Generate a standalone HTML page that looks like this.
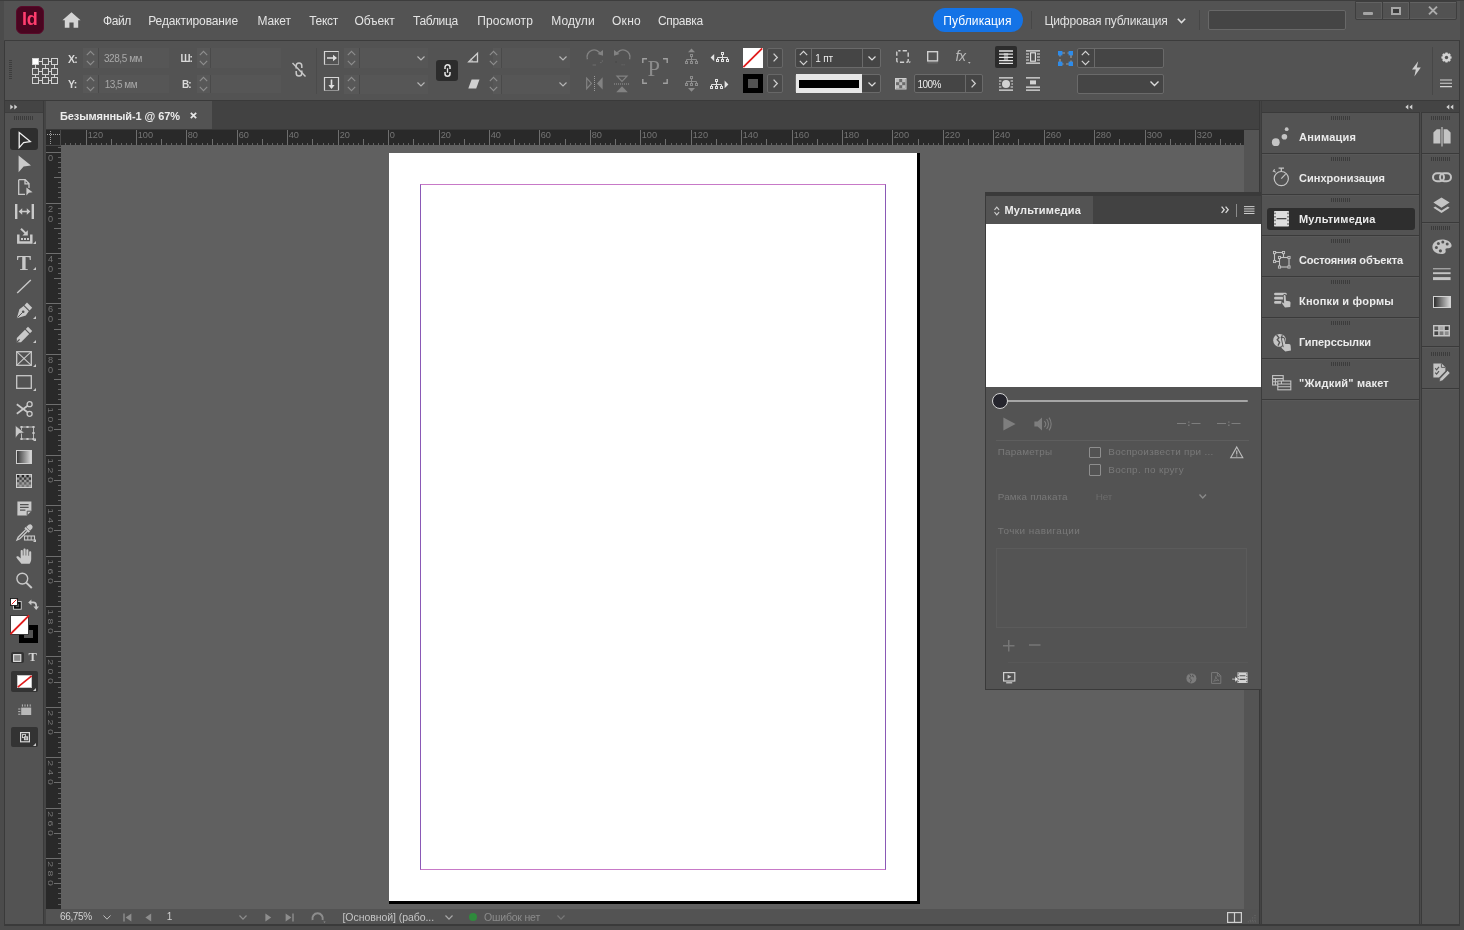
<!DOCTYPE html>
<html lang="ru">
<head>
<meta charset="utf-8">
<title>Безымянный-1 @ 67%</title>
<style>
*{box-sizing:border-box;margin:0;padding:0}
html,body{width:1464px;height:930px;overflow:hidden;background:#4b4b4b}
body{position:relative;font-family:"Liberation Sans",sans-serif;font-size:12px;color:#dcdcdc;-webkit-font-smoothing:antialiased}
.abs{position:absolute}
.t{position:absolute;white-space:nowrap;line-height:1}
svg{position:absolute;overflow:visible}
/* main frames */
#menubar{left:4px;top:0;width:1456px;height:40px;background:#535353}
#ctrl{left:4px;top:40px;width:1456px;height:60px;background:#535353;border-top:1px solid #3c3c3c;border-left:1px solid #444}
#sep1{left:4px;top:100px;width:1456px;height:1px;background:#3a3a3a}
#tools{left:5px;top:101px;width:38px;height:824px;background:#535353}
#toolshead{left:5px;top:101px;width:38px;height:11px;background:#444}
#tabbar{left:46px;top:101px;width:1213px;height:28px;background:#424242}
#tab{left:46px;top:101px;width:166px;height:28px;background:#535353}
#hruler{left:46px;top:129px;width:1198px;height:16px;background:#292929;border-top:1px solid #383838}
#vruler{left:46px;top:146px;width:15px;height:763px;background:#292929}
#canvas{left:61px;top:145px;width:1183px;height:764px;background:#606060}
#vscroll{left:1244px;top:129px;width:15px;height:780px;background:#545454;border-top:1px solid #383838}
#status{left:46px;top:909px;width:1214px;height:16px;background:#535353}
#dock{left:1262px;top:101px;width:157px;height:824px;background:#535353}
#dockhead{left:1262px;top:101px;width:197px;height:11px;background:#444}
#icons{left:1422px;top:112px;width:37px;height:813px;background:#535353}
.vline{background:#3a3a3a;width:2px}
.m{top:15px;font-size:12px;color:#e2e2e2}
.field{position:absolute;background:#464646;border:1px solid #6b6b6b;border-radius:2px}
.lbl{font-weight:bold;font-size:11px;color:#d8d8d8}
.val{font-size:11px;color:#a8a8a8}
.dis{color:#7c7c7c}
.row{position:absolute;left:1262px;width:158px;height:40px;background:#535353}
.rowt{position:absolute;left:37px;top:14px;font-weight:bold;font-size:11.5px;color:#e6e6e6;white-space:nowrap;line-height:1}
.grip{position:absolute;height:4px;background:repeating-linear-gradient(90deg,#3b3b3b 0 1px,transparent 1px 2px)}
#root{position:absolute;left:0;top:0;width:1464px;height:930px;will-change:transform;background:transparent}
</style>
</head>
<body>
<div id="root">
<!-- window frame blocks -->
<div class="abs" id="menubar"></div>
<div class="abs" id="ctrl"></div>
<div class="abs" id="sep1"></div>
<div class="abs" id="tools"></div>
<div class="abs" id="toolshead"></div>
<div class="abs" style="left:43px;top:101px;height:824px;width:3px;background:#454545;border-left:1px solid #3a3a3a"></div>
<div class="abs" id="tabbar"></div>
<div class="abs" id="tab"></div>
<div class="abs" id="hruler"></div>
<div class="abs" id="vruler"></div>
<div class="abs" id="canvas"></div>
<div class="abs" id="vscroll"></div>
<div class="abs" id="status"></div>
<div class="abs" style="left:1259px;top:101px;height:824px;width:3px;background:#444;border-left:1px solid #383838;border-right:1px solid #3c3c3c"></div>
<div class="abs" id="dock"></div>
<div class="abs" id="icons"></div>
<div class="abs" id="dockhead"></div>
<div class="abs" style="left:1262px;top:112px;width:197px;height:1px;background:#3a3a3a"></div>
<div class="abs" style="left:5px;top:112px;width:38px;height:1px;background:#3d3d3d"></div>
<div class="abs" style="left:1419px;top:112px;height:813px;width:3px;background:#4a4a4a;border-left:1px solid #3a3a3a;border-right:1px solid #3a3a3a"></div>
<div class="abs" style="left:4px;top:924px;width:1456px;height:2px;background:#3a3a3a"></div>
<div class="abs" style="left:4px;top:41px;width:1px;height:885px;background:#3a3a3a"></div>
<div class="abs" style="left:1459px;top:41px;width:1px;height:885px;background:#3a3a3a"></div>
<svg class="abs" style="left:0;top:0" width="1464" height="930" viewBox="0 0 1464 930" font-family="Liberation Sans, sans-serif" font-size="9.2" fill="#757575">
<g stroke="#6e6e6e" stroke-width="1" shape-rendering="crispEdges">
<line x1="60.5" y1="130" x2="60.5" y2="146" stroke="#484848"/>
<line x1="46" y1="145.5" x2="61" y2="145.5" stroke="#484848"/>
<line x1="65.5" y1="143" x2="65.5" y2="145" stroke="#626262"/>
<line x1="70.5" y1="143" x2="70.5" y2="145" stroke="#626262"/>
<line x1="75.5" y1="143" x2="75.5" y2="145" stroke="#626262"/>
<line x1="80.5" y1="143" x2="80.5" y2="145" stroke="#626262"/>
<line x1="86.5" y1="130" x2="86.5" y2="145"/>
<line x1="91.5" y1="143" x2="91.5" y2="145" stroke="#626262"/>
<line x1="96.5" y1="143" x2="96.5" y2="145" stroke="#626262"/>
<line x1="101.5" y1="143" x2="101.5" y2="145" stroke="#626262"/>
<line x1="106.5" y1="143" x2="106.5" y2="145" stroke="#626262"/>
<line x1="111.5" y1="139" x2="111.5" y2="145"/>
<line x1="116.5" y1="143" x2="116.5" y2="145" stroke="#626262"/>
<line x1="121.5" y1="143" x2="121.5" y2="145" stroke="#626262"/>
<line x1="126.5" y1="143" x2="126.5" y2="145" stroke="#626262"/>
<line x1="131.5" y1="143" x2="131.5" y2="145" stroke="#626262"/>
<line x1="136.5" y1="130" x2="136.5" y2="145"/>
<line x1="141.5" y1="143" x2="141.5" y2="145" stroke="#626262"/>
<line x1="146.5" y1="143" x2="146.5" y2="145" stroke="#626262"/>
<line x1="151.5" y1="143" x2="151.5" y2="145" stroke="#626262"/>
<line x1="156.5" y1="143" x2="156.5" y2="145" stroke="#626262"/>
<line x1="161.5" y1="139" x2="161.5" y2="145"/>
<line x1="166.5" y1="143" x2="166.5" y2="145" stroke="#626262"/>
<line x1="171.5" y1="143" x2="171.5" y2="145" stroke="#626262"/>
<line x1="176.5" y1="143" x2="176.5" y2="145" stroke="#626262"/>
<line x1="181.5" y1="143" x2="181.5" y2="145" stroke="#626262"/>
<line x1="186.5" y1="130" x2="186.5" y2="145"/>
<line x1="191.5" y1="143" x2="191.5" y2="145" stroke="#626262"/>
<line x1="196.5" y1="143" x2="196.5" y2="145" stroke="#626262"/>
<line x1="202.5" y1="143" x2="202.5" y2="145" stroke="#626262"/>
<line x1="207.5" y1="143" x2="207.5" y2="145" stroke="#626262"/>
<line x1="212.5" y1="139" x2="212.5" y2="145"/>
<line x1="217.5" y1="143" x2="217.5" y2="145" stroke="#626262"/>
<line x1="222.5" y1="143" x2="222.5" y2="145" stroke="#626262"/>
<line x1="227.5" y1="143" x2="227.5" y2="145" stroke="#626262"/>
<line x1="232.5" y1="143" x2="232.5" y2="145" stroke="#626262"/>
<line x1="237.5" y1="130" x2="237.5" y2="145"/>
<line x1="242.5" y1="143" x2="242.5" y2="145" stroke="#626262"/>
<line x1="247.5" y1="143" x2="247.5" y2="145" stroke="#626262"/>
<line x1="252.5" y1="143" x2="252.5" y2="145" stroke="#626262"/>
<line x1="257.5" y1="143" x2="257.5" y2="145" stroke="#626262"/>
<line x1="262.5" y1="139" x2="262.5" y2="145"/>
<line x1="267.5" y1="143" x2="267.5" y2="145" stroke="#626262"/>
<line x1="272.5" y1="143" x2="272.5" y2="145" stroke="#626262"/>
<line x1="277.5" y1="143" x2="277.5" y2="145" stroke="#626262"/>
<line x1="282.5" y1="143" x2="282.5" y2="145" stroke="#626262"/>
<line x1="287.5" y1="130" x2="287.5" y2="145"/>
<line x1="292.5" y1="143" x2="292.5" y2="145" stroke="#626262"/>
<line x1="297.5" y1="143" x2="297.5" y2="145" stroke="#626262"/>
<line x1="302.5" y1="143" x2="302.5" y2="145" stroke="#626262"/>
<line x1="307.5" y1="143" x2="307.5" y2="145" stroke="#626262"/>
<line x1="312.5" y1="139" x2="312.5" y2="145"/>
<line x1="317.5" y1="143" x2="317.5" y2="145" stroke="#626262"/>
<line x1="323.5" y1="143" x2="323.5" y2="145" stroke="#626262"/>
<line x1="328.5" y1="143" x2="328.5" y2="145" stroke="#626262"/>
<line x1="333.5" y1="143" x2="333.5" y2="145" stroke="#626262"/>
<line x1="338.5" y1="130" x2="338.5" y2="145"/>
<line x1="343.5" y1="143" x2="343.5" y2="145" stroke="#626262"/>
<line x1="348.5" y1="143" x2="348.5" y2="145" stroke="#626262"/>
<line x1="353.5" y1="143" x2="353.5" y2="145" stroke="#626262"/>
<line x1="358.5" y1="143" x2="358.5" y2="145" stroke="#626262"/>
<line x1="363.5" y1="139" x2="363.5" y2="145"/>
<line x1="368.5" y1="143" x2="368.5" y2="145" stroke="#626262"/>
<line x1="373.5" y1="143" x2="373.5" y2="145" stroke="#626262"/>
<line x1="378.5" y1="143" x2="378.5" y2="145" stroke="#626262"/>
<line x1="383.5" y1="143" x2="383.5" y2="145" stroke="#626262"/>
<line x1="388.5" y1="130" x2="388.5" y2="145"/>
<line x1="393.5" y1="143" x2="393.5" y2="145" stroke="#626262"/>
<line x1="398.5" y1="143" x2="398.5" y2="145" stroke="#626262"/>
<line x1="403.5" y1="143" x2="403.5" y2="145" stroke="#626262"/>
<line x1="408.5" y1="143" x2="408.5" y2="145" stroke="#626262"/>
<line x1="413.5" y1="139" x2="413.5" y2="145"/>
<line x1="418.5" y1="143" x2="418.5" y2="145" stroke="#626262"/>
<line x1="423.5" y1="143" x2="423.5" y2="145" stroke="#626262"/>
<line x1="428.5" y1="143" x2="428.5" y2="145" stroke="#626262"/>
<line x1="433.5" y1="143" x2="433.5" y2="145" stroke="#626262"/>
<line x1="439.5" y1="130" x2="439.5" y2="145"/>
<line x1="444.5" y1="143" x2="444.5" y2="145" stroke="#626262"/>
<line x1="449.5" y1="143" x2="449.5" y2="145" stroke="#626262"/>
<line x1="454.5" y1="143" x2="454.5" y2="145" stroke="#626262"/>
<line x1="459.5" y1="143" x2="459.5" y2="145" stroke="#626262"/>
<line x1="464.5" y1="139" x2="464.5" y2="145"/>
<line x1="469.5" y1="143" x2="469.5" y2="145" stroke="#626262"/>
<line x1="474.5" y1="143" x2="474.5" y2="145" stroke="#626262"/>
<line x1="479.5" y1="143" x2="479.5" y2="145" stroke="#626262"/>
<line x1="484.5" y1="143" x2="484.5" y2="145" stroke="#626262"/>
<line x1="489.5" y1="130" x2="489.5" y2="145"/>
<line x1="494.5" y1="143" x2="494.5" y2="145" stroke="#626262"/>
<line x1="499.5" y1="143" x2="499.5" y2="145" stroke="#626262"/>
<line x1="504.5" y1="143" x2="504.5" y2="145" stroke="#626262"/>
<line x1="509.5" y1="143" x2="509.5" y2="145" stroke="#626262"/>
<line x1="514.5" y1="139" x2="514.5" y2="145"/>
<line x1="519.5" y1="143" x2="519.5" y2="145" stroke="#626262"/>
<line x1="524.5" y1="143" x2="524.5" y2="145" stroke="#626262"/>
<line x1="529.5" y1="143" x2="529.5" y2="145" stroke="#626262"/>
<line x1="534.5" y1="143" x2="534.5" y2="145" stroke="#626262"/>
<line x1="539.5" y1="130" x2="539.5" y2="145"/>
<line x1="544.5" y1="143" x2="544.5" y2="145" stroke="#626262"/>
<line x1="549.5" y1="143" x2="549.5" y2="145" stroke="#626262"/>
<line x1="555.5" y1="143" x2="555.5" y2="145" stroke="#626262"/>
<line x1="560.5" y1="143" x2="560.5" y2="145" stroke="#626262"/>
<line x1="565.5" y1="139" x2="565.5" y2="145"/>
<line x1="570.5" y1="143" x2="570.5" y2="145" stroke="#626262"/>
<line x1="575.5" y1="143" x2="575.5" y2="145" stroke="#626262"/>
<line x1="580.5" y1="143" x2="580.5" y2="145" stroke="#626262"/>
<line x1="585.5" y1="143" x2="585.5" y2="145" stroke="#626262"/>
<line x1="590.5" y1="130" x2="590.5" y2="145"/>
<line x1="595.5" y1="143" x2="595.5" y2="145" stroke="#626262"/>
<line x1="600.5" y1="143" x2="600.5" y2="145" stroke="#626262"/>
<line x1="605.5" y1="143" x2="605.5" y2="145" stroke="#626262"/>
<line x1="610.5" y1="143" x2="610.5" y2="145" stroke="#626262"/>
<line x1="615.5" y1="139" x2="615.5" y2="145"/>
<line x1="620.5" y1="143" x2="620.5" y2="145" stroke="#626262"/>
<line x1="625.5" y1="143" x2="625.5" y2="145" stroke="#626262"/>
<line x1="630.5" y1="143" x2="630.5" y2="145" stroke="#626262"/>
<line x1="635.5" y1="143" x2="635.5" y2="145" stroke="#626262"/>
<line x1="640.5" y1="130" x2="640.5" y2="145"/>
<line x1="645.5" y1="143" x2="645.5" y2="145" stroke="#626262"/>
<line x1="650.5" y1="143" x2="650.5" y2="145" stroke="#626262"/>
<line x1="655.5" y1="143" x2="655.5" y2="145" stroke="#626262"/>
<line x1="660.5" y1="143" x2="660.5" y2="145" stroke="#626262"/>
<line x1="665.5" y1="139" x2="665.5" y2="145"/>
<line x1="671.5" y1="143" x2="671.5" y2="145" stroke="#626262"/>
<line x1="676.5" y1="143" x2="676.5" y2="145" stroke="#626262"/>
<line x1="681.5" y1="143" x2="681.5" y2="145" stroke="#626262"/>
<line x1="686.5" y1="143" x2="686.5" y2="145" stroke="#626262"/>
<line x1="691.5" y1="130" x2="691.5" y2="145"/>
<line x1="696.5" y1="143" x2="696.5" y2="145" stroke="#626262"/>
<line x1="701.5" y1="143" x2="701.5" y2="145" stroke="#626262"/>
<line x1="706.5" y1="143" x2="706.5" y2="145" stroke="#626262"/>
<line x1="711.5" y1="143" x2="711.5" y2="145" stroke="#626262"/>
<line x1="716.5" y1="139" x2="716.5" y2="145"/>
<line x1="721.5" y1="143" x2="721.5" y2="145" stroke="#626262"/>
<line x1="726.5" y1="143" x2="726.5" y2="145" stroke="#626262"/>
<line x1="731.5" y1="143" x2="731.5" y2="145" stroke="#626262"/>
<line x1="736.5" y1="143" x2="736.5" y2="145" stroke="#626262"/>
<line x1="741.5" y1="130" x2="741.5" y2="145"/>
<line x1="746.5" y1="143" x2="746.5" y2="145" stroke="#626262"/>
<line x1="751.5" y1="143" x2="751.5" y2="145" stroke="#626262"/>
<line x1="756.5" y1="143" x2="756.5" y2="145" stroke="#626262"/>
<line x1="761.5" y1="143" x2="761.5" y2="145" stroke="#626262"/>
<line x1="766.5" y1="139" x2="766.5" y2="145"/>
<line x1="771.5" y1="143" x2="771.5" y2="145" stroke="#626262"/>
<line x1="776.5" y1="143" x2="776.5" y2="145" stroke="#626262"/>
<line x1="781.5" y1="143" x2="781.5" y2="145" stroke="#626262"/>
<line x1="786.5" y1="143" x2="786.5" y2="145" stroke="#626262"/>
<line x1="792.5" y1="130" x2="792.5" y2="145"/>
<line x1="797.5" y1="143" x2="797.5" y2="145" stroke="#626262"/>
<line x1="802.5" y1="143" x2="802.5" y2="145" stroke="#626262"/>
<line x1="807.5" y1="143" x2="807.5" y2="145" stroke="#626262"/>
<line x1="812.5" y1="143" x2="812.5" y2="145" stroke="#626262"/>
<line x1="817.5" y1="139" x2="817.5" y2="145"/>
<line x1="822.5" y1="143" x2="822.5" y2="145" stroke="#626262"/>
<line x1="827.5" y1="143" x2="827.5" y2="145" stroke="#626262"/>
<line x1="832.5" y1="143" x2="832.5" y2="145" stroke="#626262"/>
<line x1="837.5" y1="143" x2="837.5" y2="145" stroke="#626262"/>
<line x1="842.5" y1="130" x2="842.5" y2="145"/>
<line x1="847.5" y1="143" x2="847.5" y2="145" stroke="#626262"/>
<line x1="852.5" y1="143" x2="852.5" y2="145" stroke="#626262"/>
<line x1="857.5" y1="143" x2="857.5" y2="145" stroke="#626262"/>
<line x1="862.5" y1="143" x2="862.5" y2="145" stroke="#626262"/>
<line x1="867.5" y1="139" x2="867.5" y2="145"/>
<line x1="872.5" y1="143" x2="872.5" y2="145" stroke="#626262"/>
<line x1="877.5" y1="143" x2="877.5" y2="145" stroke="#626262"/>
<line x1="882.5" y1="143" x2="882.5" y2="145" stroke="#626262"/>
<line x1="887.5" y1="143" x2="887.5" y2="145" stroke="#626262"/>
<line x1="892.5" y1="130" x2="892.5" y2="145"/>
<line x1="897.5" y1="143" x2="897.5" y2="145" stroke="#626262"/>
<line x1="902.5" y1="143" x2="902.5" y2="145" stroke="#626262"/>
<line x1="908.5" y1="143" x2="908.5" y2="145" stroke="#626262"/>
<line x1="913.5" y1="143" x2="913.5" y2="145" stroke="#626262"/>
<line x1="918.5" y1="139" x2="918.5" y2="145"/>
<line x1="923.5" y1="143" x2="923.5" y2="145" stroke="#626262"/>
<line x1="928.5" y1="143" x2="928.5" y2="145" stroke="#626262"/>
<line x1="933.5" y1="143" x2="933.5" y2="145" stroke="#626262"/>
<line x1="938.5" y1="143" x2="938.5" y2="145" stroke="#626262"/>
<line x1="943.5" y1="130" x2="943.5" y2="145"/>
<line x1="948.5" y1="143" x2="948.5" y2="145" stroke="#626262"/>
<line x1="953.5" y1="143" x2="953.5" y2="145" stroke="#626262"/>
<line x1="958.5" y1="143" x2="958.5" y2="145" stroke="#626262"/>
<line x1="963.5" y1="143" x2="963.5" y2="145" stroke="#626262"/>
<line x1="968.5" y1="139" x2="968.5" y2="145"/>
<line x1="973.5" y1="143" x2="973.5" y2="145" stroke="#626262"/>
<line x1="978.5" y1="143" x2="978.5" y2="145" stroke="#626262"/>
<line x1="983.5" y1="143" x2="983.5" y2="145" stroke="#626262"/>
<line x1="988.5" y1="143" x2="988.5" y2="145" stroke="#626262"/>
<line x1="993.5" y1="130" x2="993.5" y2="145"/>
<line x1="998.5" y1="143" x2="998.5" y2="145" stroke="#626262"/>
<line x1="1003.5" y1="143" x2="1003.5" y2="145" stroke="#626262"/>
<line x1="1008.5" y1="143" x2="1008.5" y2="145" stroke="#626262"/>
<line x1="1013.5" y1="143" x2="1013.5" y2="145" stroke="#626262"/>
<line x1="1018.5" y1="139" x2="1018.5" y2="145"/>
<line x1="1024.5" y1="143" x2="1024.5" y2="145" stroke="#626262"/>
<line x1="1029.5" y1="143" x2="1029.5" y2="145" stroke="#626262"/>
<line x1="1034.5" y1="143" x2="1034.5" y2="145" stroke="#626262"/>
<line x1="1039.5" y1="143" x2="1039.5" y2="145" stroke="#626262"/>
<line x1="1044.5" y1="130" x2="1044.5" y2="145"/>
<line x1="1049.5" y1="143" x2="1049.5" y2="145" stroke="#626262"/>
<line x1="1054.5" y1="143" x2="1054.5" y2="145" stroke="#626262"/>
<line x1="1059.5" y1="143" x2="1059.5" y2="145" stroke="#626262"/>
<line x1="1064.5" y1="143" x2="1064.5" y2="145" stroke="#626262"/>
<line x1="1069.5" y1="139" x2="1069.5" y2="145"/>
<line x1="1074.5" y1="143" x2="1074.5" y2="145" stroke="#626262"/>
<line x1="1079.5" y1="143" x2="1079.5" y2="145" stroke="#626262"/>
<line x1="1084.5" y1="143" x2="1084.5" y2="145" stroke="#626262"/>
<line x1="1089.5" y1="143" x2="1089.5" y2="145" stroke="#626262"/>
<line x1="1094.5" y1="130" x2="1094.5" y2="145"/>
<line x1="1099.5" y1="143" x2="1099.5" y2="145" stroke="#626262"/>
<line x1="1104.5" y1="143" x2="1104.5" y2="145" stroke="#626262"/>
<line x1="1109.5" y1="143" x2="1109.5" y2="145" stroke="#626262"/>
<line x1="1114.5" y1="143" x2="1114.5" y2="145" stroke="#626262"/>
<line x1="1119.5" y1="139" x2="1119.5" y2="145"/>
<line x1="1124.5" y1="143" x2="1124.5" y2="145" stroke="#626262"/>
<line x1="1129.5" y1="143" x2="1129.5" y2="145" stroke="#626262"/>
<line x1="1134.5" y1="143" x2="1134.5" y2="145" stroke="#626262"/>
<line x1="1140.5" y1="143" x2="1140.5" y2="145" stroke="#626262"/>
<line x1="1145.5" y1="130" x2="1145.5" y2="145"/>
<line x1="1150.5" y1="143" x2="1150.5" y2="145" stroke="#626262"/>
<line x1="1155.5" y1="143" x2="1155.5" y2="145" stroke="#626262"/>
<line x1="1160.5" y1="143" x2="1160.5" y2="145" stroke="#626262"/>
<line x1="1165.5" y1="143" x2="1165.5" y2="145" stroke="#626262"/>
<line x1="1170.5" y1="139" x2="1170.5" y2="145"/>
<line x1="1175.5" y1="143" x2="1175.5" y2="145" stroke="#626262"/>
<line x1="1180.5" y1="143" x2="1180.5" y2="145" stroke="#626262"/>
<line x1="1185.5" y1="143" x2="1185.5" y2="145" stroke="#626262"/>
<line x1="1190.5" y1="143" x2="1190.5" y2="145" stroke="#626262"/>
<line x1="1195.5" y1="130" x2="1195.5" y2="145"/>
<line x1="1200.5" y1="143" x2="1200.5" y2="145" stroke="#626262"/>
<line x1="1205.5" y1="143" x2="1205.5" y2="145" stroke="#626262"/>
<line x1="1210.5" y1="143" x2="1210.5" y2="145" stroke="#626262"/>
<line x1="1215.5" y1="143" x2="1215.5" y2="145" stroke="#626262"/>
<line x1="1220.5" y1="139" x2="1220.5" y2="145"/>
<line x1="1225.5" y1="143" x2="1225.5" y2="145" stroke="#626262"/>
<line x1="1230.5" y1="143" x2="1230.5" y2="145" stroke="#626262"/>
<line x1="1235.5" y1="143" x2="1235.5" y2="145" stroke="#626262"/>
<line x1="1240.5" y1="143" x2="1240.5" y2="145" stroke="#626262"/>
<line x1="58" y1="147.5" x2="61" y2="147.5" stroke="#626262"/>
<line x1="46" y1="152.5" x2="61" y2="152.5"/>
<line x1="58" y1="157.5" x2="61" y2="157.5" stroke="#626262"/>
<line x1="58" y1="162.5" x2="61" y2="162.5" stroke="#626262"/>
<line x1="58" y1="167.5" x2="61" y2="167.5" stroke="#626262"/>
<line x1="58" y1="172.5" x2="61" y2="172.5" stroke="#626262"/>
<line x1="54" y1="177.5" x2="61" y2="177.5"/>
<line x1="58" y1="182.5" x2="61" y2="182.5" stroke="#626262"/>
<line x1="58" y1="187.5" x2="61" y2="187.5" stroke="#626262"/>
<line x1="58" y1="192.5" x2="61" y2="192.5" stroke="#626262"/>
<line x1="58" y1="197.5" x2="61" y2="197.5" stroke="#626262"/>
<line x1="46" y1="203.5" x2="61" y2="203.5"/>
<line x1="58" y1="208.5" x2="61" y2="208.5" stroke="#626262"/>
<line x1="58" y1="213.5" x2="61" y2="213.5" stroke="#626262"/>
<line x1="58" y1="218.5" x2="61" y2="218.5" stroke="#626262"/>
<line x1="58" y1="223.5" x2="61" y2="223.5" stroke="#626262"/>
<line x1="54" y1="228.5" x2="61" y2="228.5"/>
<line x1="58" y1="233.5" x2="61" y2="233.5" stroke="#626262"/>
<line x1="58" y1="238.5" x2="61" y2="238.5" stroke="#626262"/>
<line x1="58" y1="243.5" x2="61" y2="243.5" stroke="#626262"/>
<line x1="58" y1="248.5" x2="61" y2="248.5" stroke="#626262"/>
<line x1="46" y1="253.5" x2="61" y2="253.5"/>
<line x1="58" y1="258.5" x2="61" y2="258.5" stroke="#626262"/>
<line x1="58" y1="263.5" x2="61" y2="263.5" stroke="#626262"/>
<line x1="58" y1="268.5" x2="61" y2="268.5" stroke="#626262"/>
<line x1="58" y1="273.5" x2="61" y2="273.5" stroke="#626262"/>
<line x1="54" y1="278.5" x2="61" y2="278.5"/>
<line x1="58" y1="283.5" x2="61" y2="283.5" stroke="#626262"/>
<line x1="58" y1="288.5" x2="61" y2="288.5" stroke="#626262"/>
<line x1="58" y1="293.5" x2="61" y2="293.5" stroke="#626262"/>
<line x1="58" y1="298.5" x2="61" y2="298.5" stroke="#626262"/>
<line x1="46" y1="303.5" x2="61" y2="303.5"/>
<line x1="58" y1="308.5" x2="61" y2="308.5" stroke="#626262"/>
<line x1="58" y1="313.5" x2="61" y2="313.5" stroke="#626262"/>
<line x1="58" y1="319.5" x2="61" y2="319.5" stroke="#626262"/>
<line x1="58" y1="324.5" x2="61" y2="324.5" stroke="#626262"/>
<line x1="54" y1="329.5" x2="61" y2="329.5"/>
<line x1="58" y1="334.5" x2="61" y2="334.5" stroke="#626262"/>
<line x1="58" y1="339.5" x2="61" y2="339.5" stroke="#626262"/>
<line x1="58" y1="344.5" x2="61" y2="344.5" stroke="#626262"/>
<line x1="58" y1="349.5" x2="61" y2="349.5" stroke="#626262"/>
<line x1="46" y1="354.5" x2="61" y2="354.5"/>
<line x1="58" y1="359.5" x2="61" y2="359.5" stroke="#626262"/>
<line x1="58" y1="364.5" x2="61" y2="364.5" stroke="#626262"/>
<line x1="58" y1="369.5" x2="61" y2="369.5" stroke="#626262"/>
<line x1="58" y1="374.5" x2="61" y2="374.5" stroke="#626262"/>
<line x1="54" y1="379.5" x2="61" y2="379.5"/>
<line x1="58" y1="384.5" x2="61" y2="384.5" stroke="#626262"/>
<line x1="58" y1="389.5" x2="61" y2="389.5" stroke="#626262"/>
<line x1="58" y1="394.5" x2="61" y2="394.5" stroke="#626262"/>
<line x1="58" y1="399.5" x2="61" y2="399.5" stroke="#626262"/>
<line x1="46" y1="404.5" x2="61" y2="404.5"/>
<line x1="58" y1="409.5" x2="61" y2="409.5" stroke="#626262"/>
<line x1="58" y1="414.5" x2="61" y2="414.5" stroke="#626262"/>
<line x1="58" y1="419.5" x2="61" y2="419.5" stroke="#626262"/>
<line x1="58" y1="424.5" x2="61" y2="424.5" stroke="#626262"/>
<line x1="54" y1="429.5" x2="61" y2="429.5"/>
<line x1="58" y1="435.5" x2="61" y2="435.5" stroke="#626262"/>
<line x1="58" y1="440.5" x2="61" y2="440.5" stroke="#626262"/>
<line x1="58" y1="445.5" x2="61" y2="445.5" stroke="#626262"/>
<line x1="58" y1="450.5" x2="61" y2="450.5" stroke="#626262"/>
<line x1="46" y1="455.5" x2="61" y2="455.5"/>
<line x1="58" y1="460.5" x2="61" y2="460.5" stroke="#626262"/>
<line x1="58" y1="465.5" x2="61" y2="465.5" stroke="#626262"/>
<line x1="58" y1="470.5" x2="61" y2="470.5" stroke="#626262"/>
<line x1="58" y1="475.5" x2="61" y2="475.5" stroke="#626262"/>
<line x1="54" y1="480.5" x2="61" y2="480.5"/>
<line x1="58" y1="485.5" x2="61" y2="485.5" stroke="#626262"/>
<line x1="58" y1="490.5" x2="61" y2="490.5" stroke="#626262"/>
<line x1="58" y1="495.5" x2="61" y2="495.5" stroke="#626262"/>
<line x1="58" y1="500.5" x2="61" y2="500.5" stroke="#626262"/>
<line x1="46" y1="505.5" x2="61" y2="505.5"/>
<line x1="58" y1="510.5" x2="61" y2="510.5" stroke="#626262"/>
<line x1="58" y1="515.5" x2="61" y2="515.5" stroke="#626262"/>
<line x1="58" y1="520.5" x2="61" y2="520.5" stroke="#626262"/>
<line x1="58" y1="525.5" x2="61" y2="525.5" stroke="#626262"/>
<line x1="54" y1="530.5" x2="61" y2="530.5"/>
<line x1="58" y1="535.5" x2="61" y2="535.5" stroke="#626262"/>
<line x1="58" y1="540.5" x2="61" y2="540.5" stroke="#626262"/>
<line x1="58" y1="545.5" x2="61" y2="545.5" stroke="#626262"/>
<line x1="58" y1="550.5" x2="61" y2="550.5" stroke="#626262"/>
<line x1="46" y1="556.5" x2="61" y2="556.5"/>
<line x1="58" y1="561.5" x2="61" y2="561.5" stroke="#626262"/>
<line x1="58" y1="566.5" x2="61" y2="566.5" stroke="#626262"/>
<line x1="58" y1="571.5" x2="61" y2="571.5" stroke="#626262"/>
<line x1="58" y1="576.5" x2="61" y2="576.5" stroke="#626262"/>
<line x1="54" y1="581.5" x2="61" y2="581.5"/>
<line x1="58" y1="586.5" x2="61" y2="586.5" stroke="#626262"/>
<line x1="58" y1="591.5" x2="61" y2="591.5" stroke="#626262"/>
<line x1="58" y1="596.5" x2="61" y2="596.5" stroke="#626262"/>
<line x1="58" y1="601.5" x2="61" y2="601.5" stroke="#626262"/>
<line x1="46" y1="606.5" x2="61" y2="606.5"/>
<line x1="58" y1="611.5" x2="61" y2="611.5" stroke="#626262"/>
<line x1="58" y1="616.5" x2="61" y2="616.5" stroke="#626262"/>
<line x1="58" y1="621.5" x2="61" y2="621.5" stroke="#626262"/>
<line x1="58" y1="626.5" x2="61" y2="626.5" stroke="#626262"/>
<line x1="54" y1="631.5" x2="61" y2="631.5"/>
<line x1="58" y1="636.5" x2="61" y2="636.5" stroke="#626262"/>
<line x1="58" y1="641.5" x2="61" y2="641.5" stroke="#626262"/>
<line x1="58" y1="646.5" x2="61" y2="646.5" stroke="#626262"/>
<line x1="58" y1="651.5" x2="61" y2="651.5" stroke="#626262"/>
<line x1="46" y1="656.5" x2="61" y2="656.5"/>
<line x1="58" y1="661.5" x2="61" y2="661.5" stroke="#626262"/>
<line x1="58" y1="666.5" x2="61" y2="666.5" stroke="#626262"/>
<line x1="58" y1="672.5" x2="61" y2="672.5" stroke="#626262"/>
<line x1="58" y1="677.5" x2="61" y2="677.5" stroke="#626262"/>
<line x1="54" y1="682.5" x2="61" y2="682.5"/>
<line x1="58" y1="687.5" x2="61" y2="687.5" stroke="#626262"/>
<line x1="58" y1="692.5" x2="61" y2="692.5" stroke="#626262"/>
<line x1="58" y1="697.5" x2="61" y2="697.5" stroke="#626262"/>
<line x1="58" y1="702.5" x2="61" y2="702.5" stroke="#626262"/>
<line x1="46" y1="707.5" x2="61" y2="707.5"/>
<line x1="58" y1="712.5" x2="61" y2="712.5" stroke="#626262"/>
<line x1="58" y1="717.5" x2="61" y2="717.5" stroke="#626262"/>
<line x1="58" y1="722.5" x2="61" y2="722.5" stroke="#626262"/>
<line x1="58" y1="727.5" x2="61" y2="727.5" stroke="#626262"/>
<line x1="54" y1="732.5" x2="61" y2="732.5"/>
<line x1="58" y1="737.5" x2="61" y2="737.5" stroke="#626262"/>
<line x1="58" y1="742.5" x2="61" y2="742.5" stroke="#626262"/>
<line x1="58" y1="747.5" x2="61" y2="747.5" stroke="#626262"/>
<line x1="58" y1="752.5" x2="61" y2="752.5" stroke="#626262"/>
<line x1="46" y1="757.5" x2="61" y2="757.5"/>
<line x1="58" y1="762.5" x2="61" y2="762.5" stroke="#626262"/>
<line x1="58" y1="767.5" x2="61" y2="767.5" stroke="#626262"/>
<line x1="58" y1="772.5" x2="61" y2="772.5" stroke="#626262"/>
<line x1="58" y1="777.5" x2="61" y2="777.5" stroke="#626262"/>
<line x1="54" y1="782.5" x2="61" y2="782.5"/>
<line x1="58" y1="788.5" x2="61" y2="788.5" stroke="#626262"/>
<line x1="58" y1="793.5" x2="61" y2="793.5" stroke="#626262"/>
<line x1="58" y1="798.5" x2="61" y2="798.5" stroke="#626262"/>
<line x1="58" y1="803.5" x2="61" y2="803.5" stroke="#626262"/>
<line x1="46" y1="808.5" x2="61" y2="808.5"/>
<line x1="58" y1="813.5" x2="61" y2="813.5" stroke="#626262"/>
<line x1="58" y1="818.5" x2="61" y2="818.5" stroke="#626262"/>
<line x1="58" y1="823.5" x2="61" y2="823.5" stroke="#626262"/>
<line x1="58" y1="828.5" x2="61" y2="828.5" stroke="#626262"/>
<line x1="54" y1="833.5" x2="61" y2="833.5"/>
<line x1="58" y1="838.5" x2="61" y2="838.5" stroke="#626262"/>
<line x1="58" y1="843.5" x2="61" y2="843.5" stroke="#626262"/>
<line x1="58" y1="848.5" x2="61" y2="848.5" stroke="#626262"/>
<line x1="58" y1="853.5" x2="61" y2="853.5" stroke="#626262"/>
<line x1="46" y1="858.5" x2="61" y2="858.5"/>
<line x1="58" y1="863.5" x2="61" y2="863.5" stroke="#626262"/>
<line x1="58" y1="868.5" x2="61" y2="868.5" stroke="#626262"/>
<line x1="58" y1="873.5" x2="61" y2="873.5" stroke="#626262"/>
<line x1="58" y1="878.5" x2="61" y2="878.5" stroke="#626262"/>
<line x1="54" y1="883.5" x2="61" y2="883.5"/>
<line x1="58" y1="888.5" x2="61" y2="888.5" stroke="#626262"/>
<line x1="58" y1="893.5" x2="61" y2="893.5" stroke="#626262"/>
<line x1="58" y1="898.5" x2="61" y2="898.5" stroke="#626262"/>
<line x1="58" y1="904.5" x2="61" y2="904.5" stroke="#626262"/>
</g>
<text x="87.7" y="138.4">120</text>
<text x="137.7" y="138.4">100</text>
<text x="187.7" y="138.4">80</text>
<text x="238.7" y="138.4">60</text>
<text x="288.7" y="138.4">40</text>
<text x="339.7" y="138.4">20</text>
<text x="389.7" y="138.4">0</text>
<text x="440.7" y="138.4">20</text>
<text x="490.7" y="138.4">40</text>
<text x="540.7" y="138.4">60</text>
<text x="591.7" y="138.4">80</text>
<text x="641.7" y="138.4">100</text>
<text x="692.7" y="138.4">120</text>
<text x="742.7" y="138.4">140</text>
<text x="793.7" y="138.4">160</text>
<text x="843.7" y="138.4">180</text>
<text x="893.7" y="138.4">200</text>
<text x="944.7" y="138.4">220</text>
<text x="994.7" y="138.4">240</text>
<text x="1045.7" y="138.4">260</text>
<text x="1095.7" y="138.4">280</text>
<text x="1146.7" y="138.4">300</text>
<text x="1196.7" y="138.4">320</text>
<text x="48" y="161.1">0</text>
<text x="48" y="212.1">2</text>
<text x="48" y="221.5">0</text>
<text x="48" y="262.1">4</text>
<text x="48" y="271.5">0</text>
<text x="48" y="312.1">6</text>
<text x="48" y="321.5">0</text>
<text x="48" y="363.1">8</text>
<text x="48" y="372.5">0</text>
<text transform="translate(48.3,410.3) rotate(90) scale(1.15,0.72)" text-anchor="middle">1</text>
<text transform="translate(48.3,419.5) rotate(90) scale(1.15,0.72)" text-anchor="middle">0</text>
<text transform="translate(48.3,428.9) rotate(90) scale(1.15,0.72)" text-anchor="middle">0</text>
<text transform="translate(48.3,461.3) rotate(90) scale(1.15,0.72)" text-anchor="middle">1</text>
<text transform="translate(48.3,470.5) rotate(90) scale(1.15,0.72)" text-anchor="middle">2</text>
<text transform="translate(48.3,479.9) rotate(90) scale(1.15,0.72)" text-anchor="middle">0</text>
<text transform="translate(48.3,511.3) rotate(90) scale(1.15,0.72)" text-anchor="middle">1</text>
<text transform="translate(48.3,520.5) rotate(90) scale(1.15,0.72)" text-anchor="middle">4</text>
<text transform="translate(48.3,529.9) rotate(90) scale(1.15,0.72)" text-anchor="middle">0</text>
<text transform="translate(48.3,562.3) rotate(90) scale(1.15,0.72)" text-anchor="middle">1</text>
<text transform="translate(48.3,571.5) rotate(90) scale(1.15,0.72)" text-anchor="middle">6</text>
<text transform="translate(48.3,580.9) rotate(90) scale(1.15,0.72)" text-anchor="middle">0</text>
<text transform="translate(48.3,612.3) rotate(90) scale(1.15,0.72)" text-anchor="middle">1</text>
<text transform="translate(48.3,621.5) rotate(90) scale(1.15,0.72)" text-anchor="middle">8</text>
<text transform="translate(48.3,630.9) rotate(90) scale(1.15,0.72)" text-anchor="middle">0</text>
<text transform="translate(48.3,662.3) rotate(90) scale(1.15,0.72)" text-anchor="middle">2</text>
<text transform="translate(48.3,671.5) rotate(90) scale(1.15,0.72)" text-anchor="middle">0</text>
<text transform="translate(48.3,680.9) rotate(90) scale(1.15,0.72)" text-anchor="middle">0</text>
<text transform="translate(48.3,713.3) rotate(90) scale(1.15,0.72)" text-anchor="middle">2</text>
<text transform="translate(48.3,722.5) rotate(90) scale(1.15,0.72)" text-anchor="middle">2</text>
<text transform="translate(48.3,731.9) rotate(90) scale(1.15,0.72)" text-anchor="middle">0</text>
<text transform="translate(48.3,763.3) rotate(90) scale(1.15,0.72)" text-anchor="middle">2</text>
<text transform="translate(48.3,772.5) rotate(90) scale(1.15,0.72)" text-anchor="middle">4</text>
<text transform="translate(48.3,781.9) rotate(90) scale(1.15,0.72)" text-anchor="middle">0</text>
<text transform="translate(48.3,814.3) rotate(90) scale(1.15,0.72)" text-anchor="middle">2</text>
<text transform="translate(48.3,823.5) rotate(90) scale(1.15,0.72)" text-anchor="middle">6</text>
<text transform="translate(48.3,832.9) rotate(90) scale(1.15,0.72)" text-anchor="middle">0</text>
<text transform="translate(48.3,864.3) rotate(90) scale(1.15,0.72)" text-anchor="middle">2</text>
<text transform="translate(48.3,873.5) rotate(90) scale(1.15,0.72)" text-anchor="middle">8</text>
<text transform="translate(48.3,882.9) rotate(90) scale(1.15,0.72)" text-anchor="middle">0</text>
<g stroke="#a0a0a0" stroke-width="1" stroke-dasharray="1 1" shape-rendering="crispEdges"><line x1="47" y1="134.5" x2="60" y2="134.5"/><line x1="50.5" y1="131" x2="50.5" y2="145"/></g>
</svg>
<div class="abs" style="left:389px;top:152.6px;width:531px;height:751.2px;background:#000"></div>
<div class="abs" style="left:389px;top:152.6px;width:528.4px;height:748.8px;background:#fff"></div>
<div class="abs" style="left:420px;top:184px;width:466px;height:686px;border:1px solid #c779c7;border-left-color:#8a59b6;border-right-color:#8a59b6"></div>
<!-- menubar graphics -->
<div class="abs" style="left:16px;top:6px;width:28px;height:28px;border-radius:6px;background:#4a0520;border:1px solid #590a2a"></div>
<span class="t" style="left:22px;top:9.8px;font-size:18px;font-weight:bold;color:#ff3d6e;letter-spacing:-0.2px">Id</span>
<svg style="left:62px;top:12px" width="19" height="16" viewBox="0 0 19 16"><path d="M9.5 0.3 L0.4 8.2 H2.8 V15.8 H7.4 V10.4 H11.6 V15.8 H16.2 V8.2 H18.6 Z" fill="#d4d4d4"/></svg>
<div class="abs" style="left:933px;top:8px;width:90px;height:24px;border-radius:12px;background:#1473e6"></div>
<div class="abs" style="left:1031px;top:11px;width:1px;height:18px;background:#474747"></div>
<svg style="left:1177px;top:18px" width="9" height="6" viewBox="0 0 9 6"><path d="M0.8 0.8 L4.5 4.6 L8.2 0.8" fill="none" stroke="#dedede" stroke-width="1.5"/></svg>
<div class="abs" style="left:1199px;top:10px;width:1px;height:20px;background:#474747"></div>
<div class="abs" style="left:1208px;top:10px;width:138px;height:20px;background:#454545;border:1px solid #686868;border-radius:2px"></div>
<!-- window controls -->
<div class="abs" style="left:1355px;top:1px;width:102px;height:19px;background:#525252;border:1px solid #3e3e3e;border-radius:0 0 2px 2px;box-shadow:inset 0 1px 0 #626262, inset 0 -1px 0 #5c5c5c"></div>
<div class="abs" style="left:1381px;top:2px;width:2px;height:17px;background:#3e3e3e;border-left:1px solid #5e5e5e"></div>
<div class="abs" style="left:1408px;top:2px;width:2px;height:17px;background:#3e3e3e;border-left:1px solid #5e5e5e"></div>
<div class="abs" style="left:1363px;top:12px;width:10px;height:3px;background:#a4a4a4;border-radius:1px"></div>
<div class="abs" style="left:1391px;top:7px;width:10px;height:8px;border:2px solid #a6a6a6;background:#3a3a3a"></div>
<svg style="left:1428px;top:6px" width="10" height="9" viewBox="0 0 10 9"><path d="M1 0.6 L9 8.4 M9 0.6 L1 8.4" stroke="#ababab" stroke-width="2" fill="none"/></svg>
<div class="abs" style="left:0;top:0;width:1464px;height:1px;background:#3d3d3d"></div>
<!-- control bar -->
<div class="abs" style="left:9px;top:60px;width:3px;height:20px;background:repeating-linear-gradient(180deg,#3d3d3d 0 1px,transparent 1px 2px)"></div>
<svg style="left:32px;top:57.5px" width="26" height="26" viewBox="0 0 26 26" shape-rendering="crispEdges"><rect x="0.5" y="0.5" width="6" height="6" fill="#fff" stroke="#d2d2d2" stroke-width="1"/><rect x="10.0" y="0.5" width="6" height="6" fill="none" stroke="#d2d2d2" stroke-width="1"/><rect x="19.5" y="0.5" width="6" height="6" fill="none" stroke="#d2d2d2" stroke-width="1"/><rect x="0.5" y="10.0" width="6" height="6" fill="none" stroke="#d2d2d2" stroke-width="1"/><rect x="10.0" y="10.0" width="6" height="6" fill="none" stroke="#d2d2d2" stroke-width="1"/><rect x="19.5" y="10.0" width="6" height="6" fill="none" stroke="#d2d2d2" stroke-width="1"/><rect x="0.5" y="19.5" width="6" height="6" fill="none" stroke="#d2d2d2" stroke-width="1"/><rect x="10.0" y="19.5" width="6" height="6" fill="none" stroke="#d2d2d2" stroke-width="1"/><rect x="19.5" y="19.5" width="6" height="6" fill="none" stroke="#d2d2d2" stroke-width="1"/><path d="M6.5 3.5H10M16 3.5H19.5" stroke="#d2d2d2" stroke-width="1"/><path d="M6.5 13.0H10M16 13.0H19.5" stroke="#d2d2d2" stroke-width="1"/><path d="M6.5 22.5H10M16 22.5H19.5" stroke="#d2d2d2" stroke-width="1"/><path d="M3.5 6.5V10M3.5 16V19.5" stroke="#d2d2d2" stroke-width="1"/><path d="M13.0 6.5V10M13.0 16V19.5" stroke="#d2d2d2" stroke-width="1"/><path d="M22.5 6.5V10M22.5 16V19.5" stroke="#d2d2d2" stroke-width="1"/></svg>
<div class="abs" style="left:82.5px;top:47.5px;width:16px;height:20.5px;background:#585858;border-right:1px solid #4a4a4a"></div>
<div class="abs" style="left:98.5px;top:47.5px;width:70px;height:20.5px;background:#565656;"></div>
<div class="abs" style="left:196.5px;top:47.5px;width:14.5px;height:20.5px;background:#585858;border-right:1px solid #4a4a4a"></div>
<div class="abs" style="left:211px;top:47.5px;width:70px;height:20.5px;background:#565656;"></div>
<div class="abs" style="left:82.5px;top:74.5px;width:16px;height:18.5px;background:#585858;border-right:1px solid #4a4a4a"></div>
<div class="abs" style="left:98.5px;top:74.5px;width:70px;height:18.5px;background:#565656;"></div>
<div class="abs" style="left:196.5px;top:74.5px;width:14.5px;height:18.5px;background:#585858;border-right:1px solid #4a4a4a"></div>
<div class="abs" style="left:211px;top:74.5px;width:70px;height:18.5px;background:#565656;"></div>
<svg style="left:86.0px;top:48.8px" width="9" height="18" viewBox="0 0 9 18" ><path d="M0.8 6.2 L4.5 2.4 L8.2 6.2 M0.8 11.8 L4.5 15.6 L8.2 11.8" fill="none" stroke="#8e8e8e" stroke-width="1.1"/></svg>
<svg style="left:86.0px;top:74.8px" width="9" height="18" viewBox="0 0 9 18" ><path d="M0.8 6.2 L4.5 2.4 L8.2 6.2 M0.8 11.8 L4.5 15.6 L8.2 11.8" fill="none" stroke="#8e8e8e" stroke-width="1.1"/></svg>
<svg style="left:199.0px;top:48.8px" width="9" height="18" viewBox="0 0 9 18" ><path d="M0.8 6.2 L4.5 2.4 L8.2 6.2 M0.8 11.8 L4.5 15.6 L8.2 11.8" fill="none" stroke="#8e8e8e" stroke-width="1.1"/></svg>
<svg style="left:199.0px;top:74.8px" width="9" height="18" viewBox="0 0 9 18" ><path d="M0.8 6.2 L4.5 2.4 L8.2 6.2 M0.8 11.8 L4.5 15.6 L8.2 11.8" fill="none" stroke="#8e8e8e" stroke-width="1.1"/></svg>
<svg style="left:291px;top:61px" width="16" height="17" viewBox="0 0 16 17" ><g fill="none" stroke="#c9c9c9" stroke-width="1.5"><path d="M5.2 7.5V4.8a2.8 2.8 0 0 1 5.6 0V7M10.8 9.5v2.7a2.8 2.8 0 0 1-5.6 0V10"/><path d="M1.5 2 L14.5 15.5" stroke-width="1.4"/></g></svg>
<div class="abs" style="left:316px;top:48px;width:1px;height:46px;background:#4b4b4b;"></div>
<svg style="left:324px;top:51px" width="15" height="14" viewBox="0 0 15 14" ><g fill="none" stroke="#d6d6d6"><path d="M0.5 13.5V0.5H14.5" stroke-width="1.2"/><path d="M0.5 13.5H14.5V0.5" stroke-width="1" stroke-dasharray="1 1"/></g><path d="M3 6.2H9V3.8L13 7L9 10.2V7.8H3Z" fill="#e0e0e0"/></svg>
<svg style="left:324px;top:77px" width="15" height="14" viewBox="0 0 15 14" ><g fill="none" stroke="#d6d6d6"><path d="M0.5 13.5V0.5H14.5V13.5" stroke-width="1.2"/><path d="M0.5 13.5H14.5" stroke-width="1" stroke-dasharray="1 1"/></g><path d="M6.7 2.5H8.3V8H10.6L7.5 12L4.4 8H6.7Z" fill="#e0e0e0"/></svg>
<div class="abs" style="left:343.5px;top:47.5px;width:16px;height:20.5px;background:#585858;border-right:1px solid #4a4a4a"></div>
<div class="abs" style="left:359.5px;top:47.5px;width:68px;height:20.5px;background:#565656;"></div>
<div class="abs" style="left:493px;top:47.5px;width:9px;height:20.5px;background:#585858;border-right:1px solid #4a4a4a"></div>
<div class="abs" style="left:502px;top:47.5px;width:68px;height:20.5px;background:#565656;"></div>
<div class="abs" style="left:343.5px;top:74.5px;width:16px;height:19px;background:#585858;border-right:1px solid #4a4a4a"></div>
<div class="abs" style="left:359.5px;top:74.5px;width:68px;height:19px;background:#565656;"></div>
<div class="abs" style="left:493px;top:74.5px;width:9px;height:19px;background:#585858;border-right:1px solid #4a4a4a"></div>
<div class="abs" style="left:502px;top:74.5px;width:68px;height:19px;background:#565656;"></div>
<svg style="left:347.0px;top:48.8px" width="9" height="18" viewBox="0 0 9 18" ><path d="M0.8 6.2 L4.5 2.4 L8.2 6.2 M0.8 11.8 L4.5 15.6 L8.2 11.8" fill="none" stroke="#8e8e8e" stroke-width="1.1"/></svg>
<svg style="left:347.0px;top:74.8px" width="9" height="18" viewBox="0 0 9 18" ><path d="M0.8 6.2 L4.5 2.4 L8.2 6.2 M0.8 11.8 L4.5 15.6 L8.2 11.8" fill="none" stroke="#8e8e8e" stroke-width="1.1"/></svg>
<svg style="left:489.0px;top:48.8px" width="9" height="18" viewBox="0 0 9 18" ><path d="M0.8 6.2 L4.5 2.4 L8.2 6.2 M0.8 11.8 L4.5 15.6 L8.2 11.8" fill="none" stroke="#8e8e8e" stroke-width="1.1"/></svg>
<svg style="left:489.0px;top:74.8px" width="9" height="18" viewBox="0 0 9 18" ><path d="M0.8 6.2 L4.5 2.4 L8.2 6.2 M0.8 11.8 L4.5 15.6 L8.2 11.8" fill="none" stroke="#8e8e8e" stroke-width="1.1"/></svg>
<svg style="left:416.5px;top:55.8px" width="8" height="4.4" viewBox="0 0 8 4.4" ><path d="M0.5 0.5 L4.0 3.9000000000000004 L7.5 0.5" fill="none" stroke="#b5b5b5" stroke-width="1.2"/></svg>
<svg style="left:416.5px;top:81.6px" width="8" height="4.4" viewBox="0 0 8 4.4" ><path d="M0.5 0.5 L4.0 3.9000000000000004 L7.5 0.5" fill="none" stroke="#b5b5b5" stroke-width="1.2"/></svg>
<svg style="left:558.5px;top:55.8px" width="8" height="4.4" viewBox="0 0 8 4.4" ><path d="M0.5 0.5 L4.0 3.9000000000000004 L7.5 0.5" fill="none" stroke="#b5b5b5" stroke-width="1.2"/></svg>
<svg style="left:558.5px;top:81.6px" width="8" height="4.4" viewBox="0 0 8 4.4" ><path d="M0.5 0.5 L4.0 3.9000000000000004 L7.5 0.5" fill="none" stroke="#b5b5b5" stroke-width="1.2"/></svg>
<div class="abs" style="left:436px;top:59.5px;width:22px;height:21.5px;background:#2c2c2c;border-radius:3px"></div>
<svg style="left:442.5px;top:63px" width="9" height="15" viewBox="0 0 9 15" ><g fill="none" stroke="#e6e6e6" stroke-width="1.5"><path d="M2 6V4.3a2.5 2.5 0 0 1 5 0V6M7 9v1.7a2.5 2.5 0 0 1-5 0V9"/><path d="M4.5 5.2V9.8" stroke-width="1.3"/></g></svg>
<svg style="left:468px;top:52px" width="12" height="11" viewBox="0 0 12 11" ><path d="M0.8 9.8 L9.5 1.2 V9.8 Z" fill="none" stroke="#cfcfcf" stroke-width="1.3"/><path d="M4.2 9.8 A4.5 4.5 0 0 0 3 6.8" fill="none" stroke="#cfcfcf" stroke-width="1"/></svg>
<svg style="left:468px;top:79px" width="12" height="10" viewBox="0 0 12 10" ><path d="M3.6 0.5H11.5L8.2 9.5H0.3Z" fill="#d0d0d0"/></svg>
<svg style="left:586px;top:48px" width="18" height="18" viewBox="0 0 18 18" ><path d="M1.4 11.2 A6.9 6.9 0 0 1 14.6 6.6" fill="none" stroke="#828282" stroke-width="1.4"/><path d="M17 2 V7.8 L11.6 6Z" fill="#828282"/><path d="M6.6 17H10" stroke="#6e6e6e" stroke-width="1"/><path d="M14.4 14.6h1M15.8 13h1" stroke="#7a7a7a"/></svg>
<svg style="left:613px;top:48px" width="18" height="18" viewBox="0 0 18 18" ><path d="M16.6 11.2 A6.9 6.9 0 0 0 3.4 6.6" fill="none" stroke="#828282" stroke-width="1.4"/><path d="M1 2 V7.8 L6.4 6Z" fill="#828282"/><path d="M8.6 16.8h1M10.6 16.8h1" stroke="#6e6e6e"/><path d="M2.4 13.4h1.2v1.2h-1.2z" fill="#3f3f3f"/></svg>
<svg style="left:586px;top:76px" width="18" height="16" viewBox="0 0 18 16" ><path d="M0.7 2.2 L5.4 7.4 L0.7 12.6 Z" fill="none" stroke="#828282" stroke-width="1.2"/><path d="M16.6 1.2 L11 7.4 L16.6 13.6 Z" fill="#828282"/><path d="M8.5 0V15.5" stroke="#9a9a9a" stroke-width="1" stroke-dasharray="1 1"/></svg>
<svg style="left:614px;top:74.5px" width="16" height="18" viewBox="0 0 16 18" ><path d="M3 1.2 L8 6.4 L13 1.2 Z" fill="none" stroke="#828282" stroke-width="1.2"/><path d="M2.2 17.3 L8 11.2 L13.8 17.3 Z" fill="#828282"/><path d="M0 9H16" stroke="#9a9a9a" stroke-width="1" stroke-dasharray="1 1"/></svg>
<svg style="left:641.5px;top:57.5px" width="26" height="26" viewBox="0 0 26 26" ><path d="M0.8 5V0.8H5M21 0.8H25.2V5M25.2 21V25.2H21M5 25.2H0.8V21" fill="none" stroke="#a0a0a0" stroke-width="1.4"/></svg>
<span class="t" style="left:647.6px;top:58.2px;font-family:'Liberation Serif',serif;font-size:22.5px;color:#8b8b8b">P</span>
<svg style="left:685px;top:48px" width="13" height="18" viewBox="0 0 13 18" ><g transform="translate(0,6)" fill="none" stroke="#8c8c8c" stroke-width="1"><rect x="5.5" y="0.5" width="2" height="2"/><rect x="0.5" y="7.5" width="2" height="2"/><rect x="5.5" y="7.5" width="2" height="2"/><rect x="10.5" y="7.5" width="2" height="2"/><path d="M6.5 3V7M1.5 7V5.5H11.5V7"/></g><path d="M3 4.2 L6.5 0.6 L10 4.2Z" fill="#8c8c8c"/></svg>
<svg style="left:685px;top:75px" width="13" height="18" viewBox="0 0 13 18" ><g transform="translate(0,1)" fill="none" stroke="#8c8c8c" stroke-width="1"><rect x="5.5" y="0.5" width="2" height="2"/><rect x="0.5" y="7.5" width="2" height="2"/><rect x="5.5" y="7.5" width="2" height="2"/><rect x="10.5" y="7.5" width="2" height="2"/><path d="M6.5 3V7M1.5 7V5.5H11.5V7"/></g><path d="M3 13 L6.5 16.8 L10 13Z" fill="#8c8c8c"/></svg>
<svg style="left:710px;top:52px" width="19" height="12" viewBox="0 0 19 12" ><g transform="translate(6,0)" fill="none" stroke="#e3e3e3" stroke-width="1"><rect x="5.5" y="0.5" width="2" height="2"/><rect x="0.5" y="7.5" width="2" height="2"/><rect x="5.5" y="7.5" width="2" height="2"/><rect x="10.5" y="7.5" width="2" height="2"/><path d="M6.5 3V7M1.5 7V5.5H11.5V7"/></g><path d="M4.2 2 L0.6 5.6 L4.2 9.2Z" fill="#e3e3e3"/></svg>
<svg style="left:710px;top:79px" width="19" height="12" viewBox="0 0 19 12" ><g transform="translate(0,0)" fill="none" stroke="#e3e3e3" stroke-width="1"><rect x="5.5" y="0.5" width="2" height="2"/><rect x="0.5" y="7.5" width="2" height="2"/><rect x="5.5" y="7.5" width="2" height="2"/><rect x="10.5" y="7.5" width="2" height="2"/><path d="M6.5 3V7M1.5 7V5.5H11.5V7"/></g><path d="M14.6 1.6 L18.4 5.4 L14.6 9.2Z" fill="#e3e3e3"/></svg>
<div class="abs" style="left:743px;top:48px;width:19.5px;height:19.5px;background:#ffffff;"></div>
<svg style="left:743px;top:48px" width="19.5" height="19.5" viewBox="0 0 19.5 19.5" ><path d="M0.3 19.2 L19.2 0.3" stroke="#e01b1b" stroke-width="1.8"/></svg>
<div class="abs" style="left:743px;top:73.5px;width:19.5px;height:19.5px;background:#000;"></div>
<div class="abs" style="left:748px;top:78.5px;width:9.5px;height:9.5px;background:#535353;"></div>
<div class="abs" style="left:767px;top:48px;width:15.5px;height:19.5px;background:#4a4a4a;border:1px solid #676767;border-radius:2px"></div>
<svg style="left:772.5px;top:53.3px" width="5" height="9" viewBox="0 0 5 9" ><path d="M0.6 0.6 L4.3 4.5 L0.6 8.4" fill="none" stroke="#d0d0d0" stroke-width="1.3"/></svg>
<div class="abs" style="left:767px;top:73.5px;width:15.5px;height:19.5px;background:#4a4a4a;border:1px solid #676767;border-radius:2px"></div>
<svg style="left:772.5px;top:78.8px" width="5" height="9" viewBox="0 0 5 9" ><path d="M0.6 0.6 L4.3 4.5 L0.6 8.4" fill="none" stroke="#d0d0d0" stroke-width="1.3"/></svg>
<div class="abs" style="left:795px;top:48px;width:85.5px;height:19.5px;background:#454545;border:1px solid #6a6a6a;border-radius:2px"></div>
<div class="abs" style="left:811px;top:48.5px;width:1px;height:18.5px;background:#6a6a6a;"></div>
<div class="abs" style="left:862px;top:48.5px;width:1px;height:18.5px;background:#6a6a6a;"></div>
<svg style="left:798.7px;top:48.8px" width="9" height="18" viewBox="0 0 9 18" ><path d="M0.8 6.2 L4.5 2.4 L8.2 6.2 M0.8 11.8 L4.5 15.6 L8.2 11.8" fill="none" stroke="#d5d5d5" stroke-width="1.2"/></svg>
<svg style="left:867.5px;top:55.8px" width="8" height="4.4" viewBox="0 0 8 4.4" ><path d="M0.5 0.5 L4.0 3.9000000000000004 L7.5 0.5" fill="none" stroke="#dcdcdc" stroke-width="1.3"/></svg>
<div class="abs" style="left:795px;top:73.5px;width:85.5px;height:19.5px;background:#454545;border:1px solid #6a6a6a;border-radius:2px"></div>
<div class="abs" style="left:795.5px;top:74px;width:66.5px;height:18.5px;background:#e7e7e7;"></div>
<div class="abs" style="left:799px;top:79.5px;width:60px;height:8.5px;background:#000;"></div>
<svg style="left:867.5px;top:81.6px" width="8" height="4.4" viewBox="0 0 8 4.4" ><path d="M0.5 0.5 L4.0 3.9000000000000004 L7.5 0.5" fill="none" stroke="#dcdcdc" stroke-width="1.3"/></svg>
<svg style="left:896px;top:50px" width="15" height="14" viewBox="0 0 15 14" ><rect x="0.8" y="0.8" width="11.4" height="11.4" rx="1.5" fill="none" stroke="#d0d0d0" stroke-width="1.4" stroke-dasharray="4.2 2.2" stroke-dashoffset="2"/><path d="M12.5 11.5h2.4l-1.2 1.8z" fill="#c8c8c8"/></svg>
<svg style="left:927px;top:51px" width="12" height="13" viewBox="0 0 12 13" ><rect x="0.7" y="0.7" width="9.8" height="9.2" fill="none" stroke="#d0d0d0" stroke-width="1.4"/><path d="M0.5 11.8H10.8" stroke="#6e6e6e" stroke-width="1.2"/></svg>
<span class="t" style="left:955.5px;top:48.5px;font-size:14px;font-style:italic;color:#b8b8b8;letter-spacing:-0.4px">fx</span>
<svg style="left:968px;top:61.5px" width="3" height="2" viewBox="0 0 3 2" ><path d="M0 0h2.6l-1.3 1.8z" fill="#b8b8b8"/></svg>
<svg style="left:895px;top:78px" width="11.5" height="11.5" viewBox="0 0 11.5 11.5" ><rect x="0.5" y="0.5" width="10.5" height="10.5" fill="#6a6a6a" stroke="#cfcfcf"/><rect x="1" y="1" width="3.2" height="3.2" fill="#bdbdbd"/><rect x="7.2" y="1" width="3.2" height="3.2" fill="#bdbdbd"/><rect x="4.2" y="4.2" width="3" height="3" fill="#bdbdbd"/><rect x="1" y="7.2" width="3.2" height="3.2" fill="#bdbdbd"/><rect x="7.2" y="7.2" width="3.2" height="3.2" fill="#bdbdbd"/></svg>
<div class="abs" style="left:914px;top:73.5px;width:68.5px;height:19.5px;background:#454545;border:1px solid #6a6a6a;border-radius:2px"></div>
<div class="abs" style="left:964.5px;top:74px;width:1px;height:18.5px;background:#6a6a6a;"></div>
<svg style="left:971.0px;top:78.8px" width="5" height="9" viewBox="0 0 5 9" ><path d="M0.6 0.6 L4.3 4.5 L0.6 8.4" fill="none" stroke="#d0d0d0" stroke-width="1.3"/></svg>
<div class="abs" style="left:995px;top:46px;width:22px;height:22px;background:#2c2c2c;border-radius:2px"></div>
<svg style="left:999px;top:50px" width="14" height="14" viewBox="0 0 14 14" ><path d="M0 1H14M0 4.2H14M0 7.4H14M0 10.6H14M0 13.4H14" stroke="#e4e4e4" stroke-width="1.3"/><rect x="4.4" y="2.6" width="5.2" height="8.8" fill="#8f8f8f" stroke="#2c2c2c" stroke-width="0.8"/><path d="M4 4.2H10M4 7.4H10M4 10.6H10" stroke="#e4e4e4" stroke-width="1.3"/></svg>
<svg style="left:1026px;top:50px" width="14" height="14" viewBox="0 0 14 14" ><path d="M0 0.8H14M0 13.2H14M0 4H3M0 7H3M0 10H3M11 4H14M11 7H14M11 10H14" stroke="#e4e4e4" stroke-width="1.2"/><rect x="4.6" y="2.8" width="4.8" height="8.4" fill="none" stroke="#e4e4e4" stroke-width="1.1"/></svg>
<svg style="left:999px;top:76.5px" width="14" height="14" viewBox="0 0 14 14" ><path d="M0 0.8H14M0 13.2H14M0 4H2.4M0 7H1.6M0 10H2.4M11.6 4H14M12.4 7H14M11.6 10H14" stroke="#e4e4e4" stroke-width="1.2"/><circle cx="7" cy="7" r="4" fill="#d2d2d2"/></svg>
<svg style="left:1026px;top:76.5px" width="14" height="14" viewBox="0 0 14 14" ><path d="M0 0.8H14M0 10.2H14M0 13.2H14" stroke="#e4e4e4" stroke-width="1.2"/><rect x="4" y="3.4" width="6" height="4" fill="#d2d2d2"/></svg>
<svg style="left:1057.5px;top:50.5px" width="15" height="15" viewBox="0 0 15 15" ><rect x="2" y="2" width="11" height="11" fill="none" stroke="#9a9a9a" stroke-width="1.2" stroke-dasharray="3 2.5" stroke-dashoffset="-2"/><rect x="0" y="0" width="4.4" height="4.4" fill="#2d8ceb"/><rect x="10.6" y="0" width="4.4" height="4.4" fill="#2d8ceb"/><rect x="0" y="10.6" width="4.4" height="4.4" fill="#2d8ceb"/><rect x="10.6" y="10.6" width="4.4" height="4.4" fill="#2d8ceb"/></svg>
<div class="abs" style="left:1076.8px;top:48px;width:87.4px;height:20px;background:#454545;border:1px solid #6a6a6a;border-radius:2px"></div>
<div class="abs" style="left:1093.6px;top:48.5px;width:1px;height:19px;background:#6a6a6a;"></div>
<svg style="left:1081.0px;top:48.8px" width="9" height="18" viewBox="0 0 9 18" ><path d="M0.8 6.2 L4.5 2.4 L8.2 6.2 M0.8 11.8 L4.5 15.6 L8.2 11.8" fill="none" stroke="#d5d5d5" stroke-width="1.2"/></svg>
<div class="abs" style="left:1076.8px;top:73.5px;width:87.4px;height:20px;background:#454545;border:1px solid #6a6a6a;border-radius:2px"></div>
<svg style="left:1149.8px;top:81.1px" width="9" height="5" viewBox="0 0 9 5" ><path d="M0.5 0.5 L4.5 4.5 L8.5 0.5" fill="none" stroke="#dcdcdc" stroke-width="1.4"/></svg>
<svg style="left:1410.5px;top:61px" width="11" height="16" viewBox="0 0 11 16" ><path d="M7.2 0.3 L1 8.6 H4.8 L3.4 15.6 L9.8 6.6 H5.8 Z" fill="#cdcdcd"/></svg>
<div class="abs" style="left:1431.5px;top:47px;width:1px;height:48px;background:#474747;"></div>
<svg style="left:1439.5px;top:51px" width="13" height="13" viewBox="0 0 13 13" ><path d="M11.60 5.47 L11.60 7.53 L9.97 8.05 L10.05 7.86 L10.83 9.37 L9.37 10.83 L7.86 10.05 L8.05 9.97 L7.53 11.60 L5.47 11.60 L4.95 9.97 L5.14 10.05 L3.63 10.83 L2.17 9.37 L2.95 7.86 L3.03 8.05 L1.40 7.53 L1.40 5.47 L3.03 4.95 L2.95 5.14 L2.17 3.63 L3.63 2.17 L5.14 2.95 L4.95 3.03 L5.47 1.40 L7.53 1.40 L8.05 3.03 L7.86 2.95 L9.37 2.17 L10.83 3.63 L10.05 5.14 L9.97 4.95Z" fill="#d3d3d3"/><circle cx="6.5" cy="6.5" r="1.7" fill="#535353"/></svg>
<svg style="left:1440px;top:79px" width="12" height="9" viewBox="0 0 12 9" ><path d="M0 1H12M0 4.3H12M0 7.6H12" stroke="#d3d3d3" stroke-width="1.1"/></svg>
<!-- tools panel -->
<svg style="left:10px;top:104px" width="8" height="6" viewBox="0 0 8 6" ><path d="M0.3 0.4 L3.3 3 L0.3 5.6Z M4.3 0.4 L7.3 3 L4.3 5.6Z" fill="#d0d0d0"/></svg>
<div class="grip" style="left:14px;top:116px;width:19px"></div>
<div class="abs" style="left:10px;top:128px;width:28px;height:22px;background:#2e2e2e;border-radius:3px"></div>
<svg style="left:18px;top:131px" width="14" height="18" viewBox="0 0 14 18" ><path d="M1.2 1.6 L12.3 10.6 L5.6 11.6 L1.2 16.6 Z" fill="none" stroke="#f0f0f0" stroke-width="1.3" stroke-linejoin="miter"/></svg>
<svg style="left:18px;top:155px" width="14" height="18" viewBox="0 0 14 18" ><path d="M0.6 0.6 L13 10.4 L5.6 11.4 L0.6 17.2 Z" fill="#c9c9c9"/></svg>
<svg style="left:18px;top:178.5px" width="15" height="17" viewBox="0 0 15 17" ><path d="M0.7 0.7 H7.2 L11 4.6 V9 M7 15.3 H0.7 V0.7 M7 0.9 V4.8 H10.8" fill="none" stroke="#c9c9c9" stroke-width="1.3"/><path d="M8.4 8.6 L14.6 13.2 L10.9 13.7 L8.4 16.6Z" fill="#c9c9c9"/></svg>
<svg style="left:14.5px;top:204px" width="19" height="15" viewBox="0 0 19 15" ><path d="M1.2 0V15M17.8 0V15" stroke="#c9c9c9" stroke-width="2.4"/><path d="M3.6 7.5 L7.2 4.3 V6.7 H11.8 V4.3 L15.4 7.5 L11.8 10.7 V8.3 H7.2 V10.7Z" fill="#c9c9c9"/></svg>
<svg style="left:16.5px;top:227.5px" width="16" height="16" viewBox="0 0 16 16" ><path d="M1.3 6.5V14.6H14.3V6.5" fill="none" stroke="#c9c9c9" stroke-width="2.5"/><path d="M4 10h2v2H4zM7 10h2v2H7zM10 10h2v2h-2z" fill="#c9c9c9"/><path d="M4 0.8 L9 5.6" stroke="#c9c9c9" stroke-width="2"/><path d="M10.8 2.2 V7.6 H5.4Z" fill="#c9c9c9"/></svg>
<svg style="left:33px;top:241px" width="3" height="3" viewBox="0 0 3 3" ><path d="M3 0V3H0Z" fill="#c9c9c9"/></svg>
<span class="t" style="left:16.8px;top:252.6px;font-family:'Liberation Serif',serif;font-weight:bold;font-size:21.5px;color:#c9c9c9">T</span>
<svg style="left:33px;top:267px" width="3" height="3" viewBox="0 0 3 3" ><path d="M3 0V3H0Z" fill="#c9c9c9"/></svg>
<svg style="left:16px;top:278.5px" width="16" height="15" viewBox="0 0 16 15" ><path d="M1.2 14 L14.8 1" stroke="#c9c9c9" stroke-width="1.4"/></svg>
<svg style="left:15.5px;top:301.5px" width="17" height="17" viewBox="0 0 17 17" ><path d="M11 0.6 L16.2 5.8 L13.6 8.4 L8.4 3.2Z" fill="#c9c9c9"/><path d="M7.6 4 L12.8 9.2 L9.8 13.6 L0.8 16.2 L3.4 7.2Z M1.2 15.8 L6.4 10.6" fill="#c9c9c9"/><path d="M1.4 15.6 L6.6 10.4" stroke="#535353" stroke-width="1"/><circle cx="7.2" cy="9.8" r="1.3" fill="#535353"/></svg>
<svg style="left:33px;top:315.5px" width="3" height="3" viewBox="0 0 3 3" ><path d="M3 0V3H0Z" fill="#c9c9c9"/></svg>
<svg style="left:15.5px;top:325.5px" width="17" height="17" viewBox="0 0 17 17" ><path d="M12 0.8 L16.2 5 L14 7.2 L9.8 3Z" fill="#c9c9c9"/><path d="M9 3.8 L13.2 8 L5 16.2 L0.8 16.2 L0.8 12Z" fill="#c9c9c9"/><path d="M1 16 L3.6 13.4" stroke="#535353" stroke-width="1.2"/></svg>
<svg style="left:33px;top:339.5px" width="3" height="3" viewBox="0 0 3 3" ><path d="M3 0V3H0Z" fill="#c9c9c9"/></svg>
<svg style="left:16px;top:350.5px" width="16" height="15" viewBox="0 0 16 15" ><rect x="0.7" y="0.7" width="14.6" height="13.6" fill="none" stroke="#c9c9c9" stroke-width="1.3"/><path d="M0.7 0.7 L15.3 14.3 M15.3 0.7 L0.7 14.3" stroke="#c9c9c9" stroke-width="1.1"/></svg>
<svg style="left:33px;top:363.5px" width="3" height="3" viewBox="0 0 3 3" ><path d="M3 0V3H0Z" fill="#c9c9c9"/></svg>
<svg style="left:16px;top:375px" width="16" height="14" viewBox="0 0 16 14" ><rect x="0.7" y="0.7" width="14.6" height="12.6" fill="none" stroke="#c9c9c9" stroke-width="1.3"/></svg>
<svg style="left:33px;top:387.5px" width="3" height="3" viewBox="0 0 3 3" ><path d="M3 0V3H0Z" fill="#c9c9c9"/></svg>
<svg style="left:16px;top:401px" width="18" height="16" viewBox="0 0 18 16" ><g fill="none" stroke="#c9c9c9"><circle cx="13.6" cy="3.2" r="2.5" stroke-width="1.3"/><circle cx="13.6" cy="12.8" r="2.5" stroke-width="1.3"/><path d="M0.8 3.2 L11.6 11.2 M0.8 12.8 L11.6 4.8" stroke-width="1.7"/></g></svg>
<svg style="left:14.5px;top:424.5px" width="21" height="16" viewBox="0 0 21 16" ><rect x="6.5" y="2" width="12" height="12" fill="none" stroke="#b8b8b8" stroke-width="1"/><path d="M5.4 0.9h2.2v2.2H5.4zM11.4 0.9h2.2v2.2h-2.2zM17.4 0.9h2.2v2.2h-2.2zM17.4 6.9h2.2v2.2h-2.2zM17.4 12.9h2.2v2.2h-2.2zM11.4 12.9h2.2v2.2h-2.2zM5.4 12.9h2.2v2.2H5.4z" fill="#c9c9c9"/><path d="M0.4 0.4 L9.4 7.8 L4 8.6 L0.4 13.2Z" fill="#c9c9c9" stroke="#535353" stroke-width="0.6"/></svg>
<svg style="left:33px;top:438px" width="3" height="3" viewBox="0 0 3 3" ><path d="M3 0V3H0Z" fill="#c9c9c9"/></svg>
<div class="abs" style="left:16px;top:450px;width:16px;height:14px;border:1px solid #cfcfcf;background:linear-gradient(90deg,#3a3a3a,#d8d8d8)"></div>
<svg style="left:16px;top:474px" width="16" height="14" viewBox="0 0 16 14" ><rect x="0.5" y="0.5" width="15" height="13" fill="#9c9c9c" stroke="#cfcfcf"/><rect x="1.00" y="1.00" width="2.35" height="2.4" fill="#1e1e1e" opacity="0.95"/><rect x="5.70" y="1.00" width="2.35" height="2.4" fill="#1e1e1e" opacity="0.95"/><rect x="10.40" y="1.00" width="2.35" height="2.4" fill="#1e1e1e" opacity="0.95"/><rect x="3.35" y="3.40" width="2.35" height="2.4" fill="#1e1e1e" opacity="0.78"/><rect x="8.05" y="3.40" width="2.35" height="2.4" fill="#1e1e1e" opacity="0.78"/><rect x="12.75" y="3.40" width="2.35" height="2.4" fill="#1e1e1e" opacity="0.78"/><rect x="1.00" y="5.80" width="2.35" height="2.4" fill="#1e1e1e" opacity="0.61"/><rect x="5.70" y="5.80" width="2.35" height="2.4" fill="#1e1e1e" opacity="0.61"/><rect x="10.40" y="5.80" width="2.35" height="2.4" fill="#1e1e1e" opacity="0.61"/><rect x="3.35" y="8.20" width="2.35" height="2.4" fill="#1e1e1e" opacity="0.44"/><rect x="8.05" y="8.20" width="2.35" height="2.4" fill="#1e1e1e" opacity="0.44"/><rect x="12.75" y="8.20" width="2.35" height="2.4" fill="#1e1e1e" opacity="0.44"/><rect x="1.00" y="10.60" width="2.35" height="2.4" fill="#1e1e1e" opacity="0.27"/><rect x="5.70" y="10.60" width="2.35" height="2.4" fill="#1e1e1e" opacity="0.27"/><rect x="10.40" y="10.60" width="2.35" height="2.4" fill="#1e1e1e" opacity="0.27"/></svg>
<svg style="left:16.5px;top:501px" width="15" height="15" viewBox="0 0 15 15" ><path d="M0.4 0.4H14.4V10 L10 14.4H0.4Z" fill="#c9c9c9"/><path d="M3 3.6H11.6M3 6.4H11.6M3 9.2H8.4" stroke="#535353" stroke-width="1.3"/><path d="M10.2 14.2V10.2H14.2" fill="none" stroke="#535353" stroke-width="1"/></svg>
<svg style="left:15.5px;top:524px" width="21" height="17" viewBox="0 0 21 17" ><path d="M12.6 0.8 a2.6 2.6 0 0 1 3.6 3.6 L14 6.8 L10.2 3Z" fill="#c9c9c9"/><path d="M9 3.6 L13.4 8" stroke="#c9c9c9" stroke-width="1.8"/><path d="M10 5.4 L2.2 13.2 L1 16 L3.8 14.8 L11.6 7" fill="none" stroke="#c9c9c9" stroke-width="1.3"/><rect x="8.5" y="12" width="10" height="4" fill="none" stroke="#c9c9c9" stroke-width="1.1"/><path d="M11.8 12v4M15.2 12v4" stroke="#c9c9c9" stroke-width="1"/></svg>
<svg style="left:33px;top:539px" width="3" height="3" viewBox="0 0 3 3" ><path d="M3 0V3H0Z" fill="#c9c9c9"/></svg>
<svg style="left:16px;top:548px" width="16" height="16" viewBox="0 0 16 16" ><path transform="scale(1.17,1)" d="M4.6 15.8 C3.4 13.8 1.6 11.6 0.4 9.4 C0 8.4 1.2 7.6 2.2 8.6 L4 10.4 V3 C4 1.8 5.8 1.8 5.8 3 V7.4 H6.4 V1.4 C6.4 0.2 8.2 0.2 8.2 1.4 V7.4 H8.8 V2.2 C8.8 1 10.6 1 10.6 2.2 V7.8 H11.2 V4.2 C11.2 3 13 3 13 4.2 V11 C13 13 12.4 14.4 11.6 15.8Z" fill="#c9c9c9"/></svg>
<svg style="left:16px;top:572px" width="17" height="17" viewBox="0 0 17 17" ><circle cx="6.3" cy="6.6" r="5.4" fill="none" stroke="#c9c9c9" stroke-width="1.4"/><path d="M10.2 10.6 L15.8 16" stroke="#c9c9c9" stroke-width="2"/></svg>
<svg style="left:9.5px;top:597.5px" width="12" height="12" viewBox="0 0 12 12" ><rect x="3.6" y="3.6" width="7.6" height="7.6" fill="#000" stroke="#dcdcdc" stroke-width="0.9"/><rect x="5.6" y="5.6" width="3.6" height="3.6" fill="#535353"/><rect x="0.5" y="0.5" width="7" height="7" fill="#fff" stroke="#1a1a1a" stroke-width="0.9"/><path d="M1.6 6.4 L6.4 1.6" stroke="#e01b1b" stroke-width="1"/></svg>
<svg style="left:28px;top:599px" width="11" height="12" viewBox="0 0 11 12" ><path d="M2.2 3.4 H5.2 A3 3 0 0 1 8.2 6.4 V8" fill="none" stroke="#c9c9c9" stroke-width="1.6"/><path d="M3.4 0.6 L0.2 3.4 L3.4 6.2Z M5.4 7.4 L8.2 11 L11 7.4Z" fill="#c9c9c9"/></svg>
<div class="abs" style="left:19px;top:624.5px;width:19px;height:18.5px;background:#000;"></div>
<div class="abs" style="left:24px;top:629.5px;width:9px;height:8.5px;background:#535353;"></div>
<div class="abs" style="left:9.5px;top:615px;width:19.5px;height:19.5px;background:#fff;border:0.5px solid #3a3a3a"></div>
<svg style="left:9.5px;top:615px" width="19.5" height="19.5" viewBox="0 0 19.5 19.5" ><path d="M0.4 19.1 L19.1 0.4" stroke="#e01b1b" stroke-width="1.9"/></svg>
<div class="abs" style="left:11px;top:651.5px;width:12.5px;height:11.5px;background:#333;border-radius:2px"></div>
<svg style="left:13px;top:653.5px" width="8.5" height="8" viewBox="0 0 8.5 8" ><rect x="0.6" y="0.6" width="7.2" height="6.8" fill="#8a8a8a" stroke="#e0e0e0" stroke-width="1.1"/></svg>
<span class="t" style="left:28.6px;top:651.2px;font-family:'Liberation Serif',serif;font-weight:bold;font-size:12.5px;color:#d6d6d6">T</span>
<div class="abs" style="left:10.5px;top:670.5px;width:27px;height:21px;background:#333;border-radius:2px"></div>
<div class="abs" style="left:16.5px;top:674.5px;width:15.5px;height:13px;background:#fff;border:1px solid #c4c4c4"></div>
<svg style="left:16.5px;top:674.5px" width="15.5" height="13" viewBox="0 0 15.5 13" ><path d="M0.8 12.2 L14.7 0.8" stroke="#e01b1b" stroke-width="1.6"/></svg>
<svg style="left:33px;top:687.5px" width="3" height="3" viewBox="0 0 3 3" ><path d="M3 0V3H0Z" fill="#c9c9c9"/></svg>
<svg style="left:18px;top:704px" width="14" height="12" viewBox="0 0 14 12" ><rect x="3.2" y="3.6" width="10" height="7.4" fill="#b9b9b9"/><path d="M4.4 0.4v2.2M7 0.4v2.2M9.6 0.4v2.2M12.2 0.4v2.2M0.2 5h2.2M0.2 7.6h2.2M0.2 10.2h2.2" stroke="#b9b9b9" stroke-width="1"/></svg>
<div class="abs" style="left:10.5px;top:726.5px;width:27px;height:20.5px;background:#333;border-radius:2px"></div>
<svg style="left:19.5px;top:732px" width="10" height="10.5" viewBox="0 0 10 10.5" ><rect x="0.6" y="0.6" width="8.8" height="9.2" fill="none" stroke="#d8d8d8" stroke-width="1.2"/><rect x="2.4" y="2.6" width="3.2" height="3" fill="none" stroke="#d8d8d8" stroke-width="0.9"/><rect x="4.4" y="4.8" width="3.2" height="3" fill="#9a9a9a" stroke="#d8d8d8" stroke-width="0.9"/></svg>
<svg style="left:33px;top:743px" width="3" height="3" viewBox="0 0 3 3" ><path d="M3 0V3H0Z" fill="#c9c9c9"/></svg>
<!-- right dock -->
<svg style="left:1405px;top:104px" width="8" height="6" viewBox="0 0 8 6" ><path d="M3.3 0.4 L0.3 3 L3.3 5.6Z M7.3 0.4 L4.3 3 L7.3 5.6Z" fill="#d0d0d0"/></svg>
<svg style="left:1446px;top:104px" width="8" height="6" viewBox="0 0 8 6" ><path d="M3.3 0.4 L0.3 3 L3.3 5.6Z M7.3 0.4 L4.3 3 L7.3 5.6Z" fill="#d0d0d0"/></svg>
<div class="abs" style="left:1262px;top:153.0px;width:157px;height:1px;background:#3a3a3a;"></div>
<div class="abs" style="left:1262px;top:154.0px;width:157px;height:1px;background:#585858;"></div>
<div class="grip" style="left:1331px;top:116px;width:19px"></div>
<div class="abs" style="left:1262px;top:194.0px;width:157px;height:1px;background:#3a3a3a;"></div>
<div class="abs" style="left:1262px;top:195.0px;width:157px;height:1px;background:#585858;"></div>
<div class="grip" style="left:1331px;top:157px;width:19px"></div>
<div class="abs" style="left:1262px;top:235.0px;width:157px;height:1px;background:#3a3a3a;"></div>
<div class="abs" style="left:1262px;top:236.0px;width:157px;height:1px;background:#585858;"></div>
<div class="grip" style="left:1331px;top:198px;width:19px"></div>
<div class="abs" style="left:1262px;top:276.0px;width:157px;height:1px;background:#3a3a3a;"></div>
<div class="abs" style="left:1262px;top:277.0px;width:157px;height:1px;background:#585858;"></div>
<div class="grip" style="left:1331px;top:239px;width:19px"></div>
<div class="abs" style="left:1262px;top:317.0px;width:157px;height:1px;background:#3a3a3a;"></div>
<div class="abs" style="left:1262px;top:318.0px;width:157px;height:1px;background:#585858;"></div>
<div class="grip" style="left:1331px;top:280px;width:19px"></div>
<div class="abs" style="left:1262px;top:358.0px;width:157px;height:1px;background:#3a3a3a;"></div>
<div class="abs" style="left:1262px;top:359.0px;width:157px;height:1px;background:#585858;"></div>
<div class="grip" style="left:1331px;top:321px;width:19px"></div>
<div class="abs" style="left:1262px;top:399.0px;width:157px;height:1px;background:#3a3a3a;"></div>
<div class="abs" style="left:1262px;top:400.0px;width:157px;height:1px;background:#585858;"></div>
<div class="grip" style="left:1331px;top:362px;width:19px"></div>
<div class="abs" style="left:1267px;top:207.5px;width:148px;height:22px;background:#2e2e2e;border-radius:3px"></div>
<svg style="left:1270px;top:126px" width="20" height="21" viewBox="0 0 20 21" ><circle cx="5.8" cy="16.2" r="3.9" fill="#c4c4c4"/><circle cx="14.4" cy="10.7" r="2.8" fill="#c4c4c4"/><circle cx="16.7" cy="3.2" r="1.9" fill="#c4c4c4"/></svg>
<svg style="left:1272px;top:167px" width="19" height="20" viewBox="0 0 19 20" ><circle cx="9.3" cy="11.6" r="7.1" fill="none" stroke="#c4c4c4" stroke-width="1.2"/><path d="M9.3 4.4V1.4M6.6 1.2H12" stroke="#c4c4c4" stroke-width="1.3"/><path d="M9.3 11.6 L13.6 7.2" stroke="#c4c4c4" stroke-width="1.2"/><path d="M3.6 5.4 L1.4 3.4 M1 4.8 L2.6 2.4" stroke="#c4c4c4" stroke-width="1.1"/></svg>
<svg style="left:1273.5px;top:211px" width="15" height="15.5" viewBox="0 0 15 15.5" ><rect x="0" y="0" width="15" height="15.5" rx="0.8" fill="#dedede"/><path d="M2.6 7.7H12.4" stroke="#2e2e2e" stroke-width="1.1"/><path d="M1 1.6v1.6M1 5v1.6M1 8.6v1.6M1 12.2v1.6M14 1.6v1.6M14 5v1.6M14 8.6v1.6M14 12.2v1.6" stroke="#2e2e2e" stroke-width="1"/></svg>
<svg style="left:1273px;top:251px" width="18" height="18" viewBox="0 0 18 18" ><g fill="none" stroke="#c4c4c4" stroke-width="1.1"><rect x="1.5" y="1.5" width="9" height="9"/><rect x="6.5" y="6.5" width="9.5" height="9.5" fill="#535353"/></g><g fill="#535353" stroke="#c4c4c4" stroke-width="0.9"><rect x="0.5" y="0.5" width="2.2" height="2.2"/><rect x="9.4" y="0.5" width="2.2" height="2.2"/><rect x="0.5" y="9.4" width="2.2" height="2.2"/><rect x="5.4" y="5.4" width="2.2" height="2.2"/><rect x="14.9" y="5.4" width="2.2" height="2.2"/><rect x="5.4" y="14.9" width="2.2" height="2.2"/><rect x="14.9" y="14.9" width="2.2" height="2.2"/></g></svg>
<svg style="left:1273.5px;top:292px" width="17" height="17" viewBox="0 0 17 17" ><path d="M1.4 2H11.4M1.4 6.2H8.6M1.4 10.4H6.4" stroke="#c4c4c4" stroke-width="2.7" stroke-linecap="round"/><g transform="translate(10.5,2.9) rotate(-4) scale(0.94) translate(-3.6,0)"><path d="M2.6 1.2 C2.6 -0.3 4.7 -0.3 4.7 1.2 V6.2 L8.2 7 C9.2 7.3 9.6 8.1 9.4 9.1 L8.8 13.4 H3.2 C2.2 11.8 1.3 10.6 0.5 9.2 C0.1 8.3 1.1 7.6 1.9 8.4 L2.6 9.2 Z" fill="#c4c4c4" stroke="#535353" stroke-width="1.8" paint-order="stroke fill" stroke-linejoin="round"/></g></svg>
<svg style="left:1272.5px;top:332.5px" width="19" height="19" viewBox="0 0 19 19" ><circle cx="6.6" cy="7.4" r="6.4" fill="#c4c4c4"/><path d="M3.6 2 L6 4.8 L4.2 6.8 L6.6 9.4 L5 12.6 M9.4 2.2 L8.4 4.4 L10.6 5.6" fill="none" stroke="#535353" stroke-width="1.3"/><g transform="translate(9.8,4.9) rotate(-12) scale(1.04) translate(-3.6,0)"><path d="M2.6 1.2 C2.6 -0.3 4.7 -0.3 4.7 1.2 V6.2 L8.2 7 C9.2 7.3 9.6 8.1 9.4 9.1 L8.8 13.4 H3.2 C2.2 11.8 1.3 10.6 0.5 9.2 C0.1 8.3 1.1 7.6 1.9 8.4 L2.6 9.2 Z" fill="#c4c4c4" stroke="#535353" stroke-width="1.8" paint-order="stroke fill" stroke-linejoin="round"/></g></svg>
<svg style="left:1272px;top:375px" width="19.5" height="15.5" viewBox="0 0 19.5 15.5" ><g fill="none" stroke="#c4c4c4" stroke-width="1.1"><rect x="0.6" y="0.6" width="10.6" height="9.4"/><path d="M0.6 3.6H11.2M0.6 6.8H5.6M3.4 3.6V10"/><rect x="5.8" y="6" width="13" height="8.8" fill="#535353"/><path d="M5.8 9H18.8M5.8 11.8H18.8M9.4 6V9"/></g></svg>
<div class="abs" style="left:1422px;top:153px;width:37px;height:1px;background:#3a3a3a;"></div>
<div class="abs" style="left:1422px;top:154px;width:37px;height:1px;background:#585858;"></div>
<div class="abs" style="left:1422px;top:222px;width:37px;height:1px;background:#3a3a3a;"></div>
<div class="abs" style="left:1422px;top:223px;width:37px;height:1px;background:#585858;"></div>
<div class="abs" style="left:1422px;top:346px;width:37px;height:1px;background:#3a3a3a;"></div>
<div class="abs" style="left:1422px;top:347px;width:37px;height:1px;background:#585858;"></div>
<div class="abs" style="left:1422px;top:388px;width:37px;height:1px;background:#3a3a3a;"></div>
<div class="abs" style="left:1422px;top:389px;width:37px;height:1px;background:#585858;"></div>
<div class="grip" style="left:1431px;top:116px;width:19px"></div>
<div class="grip" style="left:1431px;top:157px;width:19px"></div>
<div class="grip" style="left:1431px;top:226px;width:19px"></div>
<div class="grip" style="left:1431px;top:351.5px;width:19px"></div>
<svg style="left:1432.5px;top:126.5px" width="18" height="20" viewBox="0 0 18 20" ><path d="M0.4 5.6 L3.8 2.2 H7.4 V16.4 H0.4Z M10.6 2.2 H14.2 L17.6 5.6 V16.4 H10.6Z" fill="#c4c4c4"/><path d="M9 0V19.6" stroke="#c4c4c4" stroke-width="1.2"/></svg>
<svg style="left:1431.5px;top:172px" width="20" height="10.5" viewBox="0 0 20 10.5" ><g fill="none" stroke="#c4c4c4" stroke-width="2"><rect x="1" y="1.2" width="11" height="8" rx="4"/><rect x="8" y="1.2" width="11" height="8" rx="4"/></g></svg>
<svg style="left:1433px;top:197px" width="17" height="18" viewBox="0 0 17 18" ><path d="M8.5 0.4 L16.6 5.6 L8.5 10.8 L0.4 5.6Z" fill="#c4c4c4"/><path d="M2.2 9.6 L0.4 10.8 L8.5 16 L16.6 10.8 L14.8 9.6 L8.5 13.6Z" fill="#c4c4c4"/></svg>
<svg style="left:1431.5px;top:238.5px" width="20" height="15.5" viewBox="0 0 20 15.5" ><path d="M10 0.4 C15.4 0.4 19.6 3 19.6 6.6 C19.6 9 17.4 9.4 15.6 9.2 C14 9 13 9.8 13.6 11.4 C14.2 13.4 12.6 15 9.6 15 C4 15 0.4 12 0.4 8 C0.4 3.6 4.6 0.4 10 0.4Z" fill="#c4c4c4"/><g fill="#535353"><circle cx="4.4" cy="8.6" r="1.5"/><circle cx="6.4" cy="4.6" r="1.5"/><circle cx="10.8" cy="3" r="1.5"/><circle cx="15.2" cy="5" r="1.5"/><circle cx="8.4" cy="11.8" r="1.6"/></g></svg>
<svg style="left:1432.5px;top:268px" width="18" height="12.5" viewBox="0 0 18 12.5" ><path d="M0 0.8H17.6" stroke="#c4c4c4" stroke-width="1"/><path d="M0 5.2H17.6" stroke="#c4c4c4" stroke-width="1.9"/><path d="M0 10.6H17.6" stroke="#c4c4c4" stroke-width="3"/></svg>
<div class="abs" style="left:1432.5px;top:296px;width:18px;height:12px;border:1px solid #d2d2d2;background:linear-gradient(90deg,#2e2e2e,#d6d6d6)"></div>
<svg style="left:1432.5px;top:325px" width="17" height="11.5" viewBox="0 0 17 11.5" ><rect x="0" y="0" width="17" height="11.5" fill="#c4c4c4"/><g fill="#5a5a5a"><rect x="1.4" y="1.4" width="3.8" height="3.6"/><rect x="6.6" y="1.4" width="3.8" height="3.6" fill="#a8a8a8"/><rect x="11.8" y="1.4" width="3.8" height="3.6" fill="#3c3c3c"/><rect x="1.4" y="6.4" width="3.8" height="3.6" fill="#444"/><rect x="6.6" y="6.4" width="3.8" height="3.6" fill="#7a7a7a"/><rect x="11.8" y="6.4" width="3.8" height="3.6" fill="#8c8c8c"/></g></svg>
<svg style="left:1433px;top:362.5px" width="18" height="19" viewBox="0 0 18 19" ><path d="M0.4 0.4 H8.6 L12.4 4.2 V8 L6 14.4 H0.4Z" fill="#c4c4c4"/><path d="M8.4 0.6V4.4H12.2" fill="none" stroke="#535353" stroke-width="0.9"/><path d="M2.2 5.2 L3.6 6.8 L6 3.8 M2.2 9.6 L3.6 11.2 L6 8.2" fill="none" stroke="#535353" stroke-width="1.1"/><path d="M14.6 7.4 L17.2 10 L9.4 17.8 L6.2 18.6 L7 15.4Z" fill="#c4c4c4" stroke="#535353" stroke-width="0.7"/></svg>
<!-- floating media panel -->
<div class="abs" style="left:985px;top:192px;width:276px;height:498px;background:#3a3a3a;"></div>
<div class="abs" style="left:986px;top:196px;width:274.5px;height:493px;background:#535353;"></div>
<div class="abs" style="left:986px;top:196px;width:274.5px;height:28px;background:#424242;"></div>
<div class="abs" style="left:986px;top:196px;width:107px;height:28px;background:#535353;"></div>
<svg style="left:993.8px;top:205.6px" width="6" height="10" viewBox="0 0 6 10" ><path d="M0.5 3.8 L2.8 1.2 L5.1 3.8 M0.5 6.2 L2.8 8.8 L5.1 6.2" fill="none" stroke="#cfcfcf" stroke-width="1.1"/></svg>
<svg style="left:1220.5px;top:206px" width="8" height="7.5" viewBox="0 0 8 7.5" ><path d="M0.6 0.6 L3.2 3.7 L0.6 6.8 M4.6 0.6 L7.2 3.7 L4.6 6.8" fill="none" stroke="#dadada" stroke-width="1.3"/></svg>
<div class="abs" style="left:1236px;top:203.5px;width:1px;height:13px;background:#8c8c8c;"></div>
<svg style="left:1244px;top:206px" width="10.5" height="8" viewBox="0 0 10.5 8" ><path d="M0 0.6H10.5M0 2.9H10.5M0 5.2H10.5M0 7.5H10.5" stroke="#cdcdcd" stroke-width="1"/></svg>
<div class="abs" style="left:986px;top:224px;width:274.5px;height:163px;background:#ffffff;"></div>
<div class="abs" style="left:1006px;top:400px;width:242px;height:2px;background:#a6a6a6;border-radius:1px"></div>
<div class="abs" style="left:991.7px;top:393px;width:16px;height:16px;border-radius:50%;background:#25252d;border:1.6px solid #d4d4d4"></div>
<svg style="left:1002.5px;top:416.5px" width="13" height="14" viewBox="0 0 13 14" ><path d="M0.4 0.4 L12.6 7 L0.4 13.6Z" fill="#7e7e7e"/></svg>
<svg style="left:1033.5px;top:416.5px" width="18" height="14" viewBox="0 0 18 14" ><path d="M0.4 4.4H3.6L8 0.6V13.4L3.6 9.6H0.4Z" fill="#7e7e7e"/><path d="M10.4 4 A4.4 4.4 0 0 1 10.4 10 M12.6 2 A7.6 7.6 0 0 1 12.6 12 M15 0.6 A10.6 10.6 0 0 1 15 13.4" fill="none" stroke="#7e7e7e" stroke-width="1.1"/></svg>
<svg style="left:1176.8px;top:420px" width="23.5" height="7" viewBox="0 0 23.5 7" ><path d="M0 3.5H9M14.5 3.5H23.5" stroke="#7e7e7e" stroke-width="1.1"/><path d="M11.2 1.4h1.3v1.3h-1.3zM11.2 4.6h1.3v1.3h-1.3z" fill="#7e7e7e"/></svg>
<svg style="left:1217px;top:420px" width="23.5" height="7" viewBox="0 0 23.5 7" ><path d="M0 3.5H9M14.5 3.5H23.5" stroke="#7e7e7e" stroke-width="1.1"/><path d="M11.2 1.4h1.3v1.3h-1.3zM11.2 4.6h1.3v1.3h-1.3z" fill="#7e7e7e"/></svg>
<div class="abs" style="left:996px;top:440px;width:253px;height:1px;background:#5e5e5e;"></div>
<div class="abs" style="left:1089.2px;top:446.8px;width:12px;height:11.5px;background:transparent;border:1px solid #8e8e8e;border-radius:1px"></div>
<div class="abs" style="left:1089.2px;top:464px;width:12px;height:11.5px;background:transparent;border:1px solid #8e8e8e;border-radius:1px"></div>
<svg style="left:1229.5px;top:445.5px" width="13.5" height="12.5" viewBox="0 0 13.5 12.5" ><path d="M6.75 0.9 L12.8 11.8 H0.7Z" fill="none" stroke="#bdbdbd" stroke-width="1.1"/><path d="M6.75 4.4V8.4M6.75 9.4V10.6" stroke="#bdbdbd" stroke-width="1.2"/></svg>
<svg style="left:1199px;top:493.5px" width="7.5" height="5" viewBox="0 0 7.5 5" ><path d="M0.5 0.6 L3.75 4 L7 0.6" fill="none" stroke="#8a8a8a" stroke-width="1.4"/></svg>
<div class="abs" style="left:996px;top:547.5px;width:251px;height:80.5px;background:#545454;border:1px solid #5b5b5b"></div>
<svg style="left:1003px;top:639.5px" width="11.5" height="11.5" viewBox="0 0 11.5 11.5" ><path d="M5.75 0V11.5M0 5.75H11.5" stroke="#767676" stroke-width="1.5"/></svg>
<svg style="left:1029px;top:644.2px" width="11.5" height="2" viewBox="0 0 11.5 2" ><path d="M0 1H11.5" stroke="#767676" stroke-width="1.5"/></svg>
<div class="abs" style="left:1008px;top:662px;width:240px;height:1px;background:#585858;"></div>
<svg style="left:1002.5px;top:672px" width="12.5" height="11.5" viewBox="0 0 12.5 11.5" ><rect x="0.6" y="0.6" width="11.2" height="8.4" fill="none" stroke="#d0d0d0" stroke-width="1.2"/><path d="M4.6 2.8 L8.4 4.8 L4.6 6.8Z" fill="#d0d0d0"/><path d="M3.2 10.8H9.2" stroke="#d0d0d0" stroke-width="1.2"/></svg>
<svg style="left:1185.5px;top:672.5px" width="11" height="11" viewBox="0 0 11 11" ><circle cx="5.4" cy="5.4" r="5" fill="#7c7c7c"/><path d="M3.6 1.2 L5 3.4 L3.4 5 L5.4 7 L4.2 9.6 M7 1.6 L6.4 3.2 L8 4 " fill="none" stroke="#535353" stroke-width="1"/></svg>
<svg style="left:1210.5px;top:672px" width="10.5" height="12" viewBox="0 0 10.5 12" ><path d="M0.6 0.6H6.6L9.8 3.8V11.4H0.6Z M6.4 0.8V4H9.6" fill="none" stroke="#7a7a7a" stroke-width="1"/><path d="M2.6 9.4 C4.2 7.6 5 5.4 4.8 4.4 C5 6.6 6.6 8.2 8 8.4 C6 8.2 3.8 8.8 2.6 9.4Z" fill="none" stroke="#7a7a7a" stroke-width="0.8"/></svg>
<svg style="left:1231.5px;top:672px" width="16" height="11.5" viewBox="0 0 16 11.5" ><rect x="5.4" y="0.4" width="10.2" height="10.6" fill="#d2d2d2"/><path d="M7.6 3.7H13.4M7.6 7.4H13.4" stroke="#535353" stroke-width="1.1"/><path d="M6.2 1.2v1.2M6.2 3.8v1.2M6.2 6.4v1.2M6.2 9v1.2M14.8 1.2v1.2M14.8 3.8v1.2M14.8 6.4v1.2M14.8 9v1.2" stroke="#535353" stroke-width="0.9"/><path d="M0 6.6H3V4.2L6.4 7.2L3 10.2V7.8H0Z" fill="#e2e2e2" stroke="#535353" stroke-width="0.5"/></svg>
<!-- status bar and tab -->
<svg style="left:189.5px;top:111.5px" width="7" height="7" viewBox="0 0 7 7" ><path d="M0.8 0.8 L6.2 6.2 M6.2 0.8 L0.8 6.2" stroke="#e6e6e6" stroke-width="1.7"/></svg>
<svg style="left:102.5px;top:914.5px" width="8" height="5" viewBox="0 0 8 5" ><path d="M0.5 0.5 L4 4.2 L7.5 0.5" fill="none" stroke="#c0c0c0" stroke-width="1"/></svg>
<svg style="left:122.5px;top:912.5px" width="9" height="9" viewBox="0 0 9 9" ><path d="M1 0.4V8.6" stroke="#8d8d8d" stroke-width="1.4"/><path d="M8.4 0.4 L2.6 4.5 L8.4 8.6Z" fill="#8d8d8d"/></svg>
<svg style="left:144.5px;top:912.5px" width="6.5" height="9" viewBox="0 0 6.5 9" ><path d="M6.2 0.4 L0.4 4.5 L6.2 8.6Z" fill="#8d8d8d"/></svg>
<svg style="left:238.5px;top:914.5px" width="8" height="5" viewBox="0 0 8 5" ><path d="M0.5 0.5 L4 4.2 L7.5 0.5" fill="none" stroke="#8d8d8d" stroke-width="1.2"/></svg>
<svg style="left:264.5px;top:912.5px" width="6.5" height="9" viewBox="0 0 6.5 9" ><path d="M0.4 0.4 L6.2 4.5 L0.4 8.6Z" fill="#8d8d8d"/></svg>
<svg style="left:284.5px;top:912.5px" width="9" height="9" viewBox="0 0 9 9" ><path d="M8 0.4V8.6" stroke="#8d8d8d" stroke-width="1.4"/><path d="M0.6 0.4 L6.4 4.5 L0.6 8.6Z" fill="#8d8d8d"/></svg>
<svg style="left:310.5px;top:911px" width="15" height="12" viewBox="0 0 15 12" ><path d="M1.6 9 A5.2 5.2 0 1 1 11.6 9" fill="none" stroke="#8d8d8d" stroke-width="2"/><path d="M12.4 10.6h2.2l-1.1 1.4z" fill="#8d8d8d"/></svg>
<svg style="left:444.5px;top:914.5px" width="8" height="5" viewBox="0 0 8 5" ><path d="M0.5 0.5 L4 4.2 L7.5 0.5" fill="none" stroke="#a8a8a8" stroke-width="1.2"/></svg>
<div class="abs" style="left:468.5px;top:912.5px;width:8.5px;height:8.5px;border-radius:50%;background:#2f8a3c"></div>
<svg style="left:556.5px;top:914.5px" width="8" height="5" viewBox="0 0 8 5" ><path d="M0.5 0.5 L4 4.2 L7.5 0.5" fill="none" stroke="#777" stroke-width="1.2"/></svg>
<svg style="left:1226.5px;top:911.5px" width="15" height="11" viewBox="0 0 15 11" ><rect x="0.6" y="0.6" width="13.8" height="9.8" fill="none" stroke="#cfcfcf" stroke-width="1.2"/><path d="M7.5 0.6V10.4" stroke="#cfcfcf" stroke-width="1.2"/></svg>
<svg style="left:1247px;top:914px" width="9" height="9" viewBox="0 0 9 9" ><path d="M8 1v1M8 3.4v1M8 5.8v1M5.6 3.4v1M5.6 5.8v1M3.2 5.8v1M0.8 7.8h1M3.2 7.8h1M5.6 7.8h1M8 7.8h0.8" stroke="#6a6a6a" stroke-width="1"/></svg>
<!-- text labels -->
<span class="t" style="left:103.00px;top:14.84px;font-size:12px;color:#e4e4e4;letter-spacing:-0.379px;">Файл</span>
<span class="t" style="left:148.25px;top:14.84px;font-size:12px;color:#e4e4e4;letter-spacing:-0.119px;">Редактирование</span>
<span class="t" style="left:257.50px;top:14.84px;font-size:12px;color:#e4e4e4;letter-spacing:-0.144px;">Макет</span>
<span class="t" style="left:309.25px;top:14.84px;font-size:12px;color:#e4e4e4;letter-spacing:-0.294px;">Текст</span>
<span class="t" style="left:354.50px;top:14.84px;font-size:12px;color:#e4e4e4;letter-spacing:-0.104px;">Объект</span>
<span class="t" style="left:413.00px;top:14.84px;font-size:12px;color:#e4e4e4;letter-spacing:-0.295px;">Таблица</span>
<span class="t" style="left:477.25px;top:14.84px;font-size:12px;color:#e4e4e4;letter-spacing:0.117px;">Просмотр</span>
<span class="t" style="left:551.25px;top:14.84px;font-size:12px;color:#e4e4e4;letter-spacing:0.086px;">Модули</span>
<span class="t" style="left:612.00px;top:14.84px;font-size:12px;color:#e4e4e4;letter-spacing:0.277px;">Окно</span>
<span class="t" style="left:658.00px;top:14.84px;font-size:12px;color:#e4e4e4;letter-spacing:-0.333px;">Справка</span>
<span class="t" style="left:943.25px;top:14.84px;font-size:12px;color:#ffffff;letter-spacing:0.119px;">Публикация</span>
<span class="t" style="left:1044.50px;top:14.84px;font-size:12px;color:#e0e0e0;letter-spacing:-0.183px;">Цифровая публикация</span>
<span class="t" style="left:68.00px;top:53.61px;font-size:10.5px;color:#dadada;font-weight:bold;letter-spacing:-0.750px;">X:</span>
<span class="t" style="left:68.00px;top:79.31px;font-size:10.5px;color:#dadada;font-weight:bold;letter-spacing:-0.367px;">Y:</span>
<span class="t" style="left:104.00px;top:53.73px;font-size:10px;color:#a9a9a9;letter-spacing:-0.445px;">328,5 мм</span>
<span class="t" style="left:104.70px;top:79.53px;font-size:10px;color:#a9a9a9;letter-spacing:-0.529px;">13,5 мм</span>
<span class="t" style="left:180.50px;top:54.03px;font-size:10px;color:#dadada;font-weight:bold;letter-spacing:-1.095px;">Ш:</span>
<span class="t" style="left:182.00px;top:79.73px;font-size:10px;color:#dadada;font-weight:bold;letter-spacing:-1.031px;">В:</span>
<span class="t" style="left:815.30px;top:53.83px;font-size:10px;color:#ececec;letter-spacing:-0.211px;">1 пт</span>
<span class="t" style="left:917.50px;top:79.73px;font-size:10px;color:#ececec;letter-spacing:-0.520px;">100%</span>
<span class="t" style="left:60.00px;top:110.69px;font-size:11px;color:#ededed;font-weight:bold;letter-spacing:-0.085px;">Безымянный-1 @ 67%</span>
<span class="t" style="left:1299.00px;top:131.89px;font-size:11px;color:#ebebeb;font-weight:bold;letter-spacing:0.199px;">Анимация</span>
<span class="t" style="left:1299.00px;top:172.89px;font-size:11px;color:#ebebeb;font-weight:bold;letter-spacing:0.023px;">Синхронизация</span>
<span class="t" style="left:1299.00px;top:213.89px;font-size:11px;color:#ebebeb;font-weight:bold;letter-spacing:0.210px;">Мультимедиа</span>
<span class="t" style="left:1299.00px;top:254.89px;font-size:11px;color:#ebebeb;font-weight:bold;letter-spacing:-0.140px;">Состояния объекта</span>
<span class="t" style="left:1299.00px;top:295.89px;font-size:11px;color:#ebebeb;font-weight:bold;letter-spacing:0.188px;">Кнопки и формы</span>
<span class="t" style="left:1299.00px;top:336.89px;font-size:11px;color:#ebebeb;font-weight:bold;letter-spacing:-0.099px;">Гиперссылки</span>
<span class="t" style="left:1299.00px;top:377.89px;font-size:11px;color:#ebebeb;font-weight:bold;letter-spacing:0.194px;">&quot;Жидкий&quot; макет</span>
<span class="t" style="left:1004.50px;top:205.49px;font-size:11px;color:#ebebeb;font-weight:bold;letter-spacing:0.210px;">Мультимедиа</span>
<span class="t" style="left:997.75px;top:447.37px;font-size:9.9px;color:#797979;letter-spacing:0.207px;">Параметры</span>
<span class="t" style="left:1108.25px;top:447.37px;font-size:9.9px;color:#797979;letter-spacing:0.294px;">Воспроизвести при ...</span>
<span class="t" style="left:1108.25px;top:465.37px;font-size:9.9px;color:#797979;letter-spacing:0.376px;">Воспр. по кругу</span>
<span class="t" style="left:997.75px;top:491.62px;font-size:9.9px;color:#797979;letter-spacing:0.181px;">Рамка плаката</span>
<span class="t" style="left:1095.75px;top:491.62px;font-size:9.9px;color:#6c6c6c;letter-spacing:-0.109px;">Нет</span>
<span class="t" style="left:997.75px;top:525.62px;font-size:9.9px;color:#797979;letter-spacing:0.464px;">Точки навигации</span>
<span class="t" style="left:60.00px;top:912.13px;font-size:10px;color:#d2d2d2;letter-spacing:-0.370px;">66,75%</span>
<span class="t" style="left:166.70px;top:912.13px;font-size:10px;color:#d2d2d2;">1</span>
<span class="t" style="left:342.50px;top:911.71px;font-size:10.5px;color:#c4c4c4;letter-spacing:-0.062px;">[Основной] (рабо...</span>
<span class="t" style="left:484.00px;top:911.71px;font-size:10.5px;color:#8b8b8b;letter-spacing:-0.192px;">Ошибок нет</span>
</div><!--root-->
</body>
</html>
